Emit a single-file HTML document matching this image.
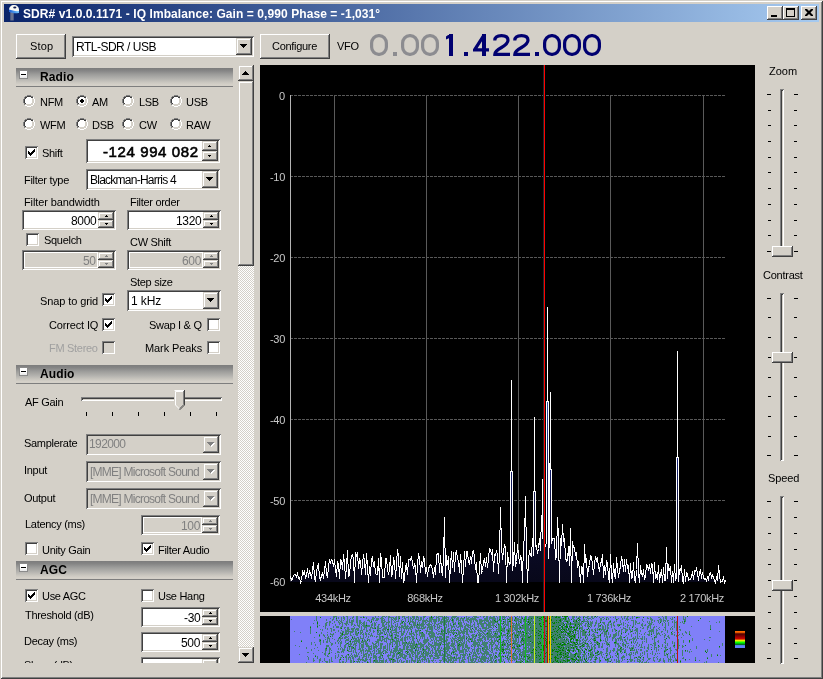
<!DOCTYPE html><html><head><meta charset="utf-8"><style>
html,body{margin:0;padding:0;}
body{width:823px;height:679px;overflow:hidden;position:relative;background:#d4d0c8;font:11px/13px "Liberation Sans",sans-serif;color:#000;}
div,svg{position:absolute;}
.vd{top:28px;font:33px/33px "Liberation Sans";transform-origin:0 0;transform:scaleX(1.12);white-space:nowrap}
.sl{font:11px/13px "Liberation Sans";color:#c8c8c8;white-space:nowrap;letter-spacing:-0.3px;will-change:transform}
.t{white-space:nowrap;letter-spacing:-0.3px;will-change:transform;}
</style></head><body>
<div style="left:0px;top:0px;width:823px;height:679px;box-shadow:inset 1px 1px #d4d0c8,inset -1px -1px #404040,inset 2px 2px #fff,inset -2px -2px #808080;"></div>
<div style="left:4px;top:4px;width:815px;height:18px;background:linear-gradient(to right,#0a246a,#a6caf0);"></div>
<div class="t" style="left:23px;top:7px;font:bold 12px/14px 'Liberation Sans';color:#fff;letter-spacing:0.08px">SDR# v1.0.0.1171 - IQ Imbalance: Gain = 0,990 Phase = -1,031°</div>
<svg style="left:8px;top:4px" width="12" height="18"><defs><linearGradient id="ib" x1="0" x2="1"><stop offset="0" stop-color="#1a5ad0"/><stop offset="1" stop-color="#70c8ff"/></linearGradient></defs><rect x="2.3" y="8.5" width="3.4" height="8" fill="#6a7490"/><path d="M1 6 C1 3 3 1 6 1 C9 1 11 3 11 6 L11 8.5 C8 9.5 4 9 1 7.5z" fill="#f8f8f4"/><path d="M1 5.5 C4 6.5 8 7.5 11 7 L11 8.7 C8 9.8 4 9.3 1 7.8z" fill="url(#ib)"/><ellipse cx="6.8" cy="3.5" rx="1.6" ry="1" fill="#101c50"/></svg>
<div style="left:767px;top:6px;width:16px;height:14px;background:#d4d0c8;box-shadow:inset -1px -1px #404040,inset 1px 1px #fff,inset -2px -2px #808080;"></div>
<div style="left:783px;top:6px;width:16px;height:14px;background:#d4d0c8;box-shadow:inset -1px -1px #404040,inset 1px 1px #fff,inset -2px -2px #808080;"></div>
<div style="left:801px;top:6px;width:16px;height:14px;background:#d4d0c8;box-shadow:inset -1px -1px #404040,inset 1px 1px #fff,inset -2px -2px #808080;"></div>
<div style="left:771px;top:15px;width:6px;height:2px;background:#000"></div>
<div style="left:786px;top:8px;width:9px;height:9px;box-shadow:inset 0 2px #000,inset 1px 0 #000,inset -1px 0 #000,inset 0 -1px #000"></div>
<svg style="left:805px;top:9px" width="8" height="7"><path d="M0 0h2l2 2l2 -2h2v1l-2.5 2.5l2.5 2.5v1h-2l-2 -2l-2 2h-2v-1l2.5 -2.5l-2.5 -2.5z" fill="#000"/></svg>
<div style="left:16px;top:34px;width:50px;height:25px;background:#d4d0c8;box-shadow:inset -1px -1px #404040,inset 1px 1px #fff,inset -2px -2px #808080;"></div>
<div class="t" style="left:30px;top:40px;letter-spacing:0.2px">Stop</div>
<div style="left:72px;top:36px;width:182px;height:21px;background:#fff;box-shadow:inset 1px 1px #808080,inset -1px -1px #fff,inset 2px 2px #404040,inset -2px -2px #d4d0c8;"></div>
<div style="left:236px;top:38px;width:16px;height:17px;background:#d4d0c8;box-shadow:inset -1px -1px #404040,inset 1px 1px #d4d0c8,inset -2px -2px #808080,inset 2px 2px #fff;"></div>
<svg style="left:240px;top:44px" width="7" height="4"><path d="M0 0h7v1h-1v1h-1v1h-1v1h-1v-1h-1v-1h-1v-1h-1z" fill="#000"/></svg>
<div style="left:74px;top:38px;width:162px;height:17px;overflow:hidden"><div class="t" style="left:2px;top:3px;font-size:12px;letter-spacing:-0.6px;letter-spacing:-0.5px">RTL-SDR / USB</div></div>
<div style="left:260px;top:34px;width:70px;height:25px;background:#d4d0c8;box-shadow:inset -1px -1px #404040,inset 1px 1px #fff,inset -2px -2px #808080;"></div>
<div class="t" style="left:272px;top:40px;">Configure</div>
<div class="t" style="left:337px;top:40px;">VFO</div>
<svg style="left:370px;top:34px" width="18" height="22"><rect x="1.6" y="1.6" width="14.8" height="18.8" rx="7" ry="7.5" fill="none" stroke="#8c8c90" stroke-width="3.2"/></svg>
<svg style="left:393px;top:34px" width="4" height="22"><rect x="0" y="18" width="4" height="4" fill="#8c8c90"/></svg>
<svg style="left:401px;top:34px" width="18" height="22"><rect x="1.6" y="1.6" width="14.8" height="18.8" rx="7" ry="7.5" fill="none" stroke="#8c8c90" stroke-width="3.2"/></svg>
<svg style="left:421px;top:34px" width="18" height="22"><rect x="1.6" y="1.6" width="14.8" height="18.8" rx="7" ry="7.5" fill="none" stroke="#8c8c90" stroke-width="3.2"/></svg>
<svg style="left:446px;top:34px" width="8" height="22"><path d="M3 0h4v22h-4z M0 2.5 L3.5 0 L3.5 4 L0 5.5z" fill="#000070"/></svg>
<svg style="left:464px;top:34px" width="4" height="22"><rect x="0" y="18" width="4" height="4" fill="#000070"/></svg>
<svg style="left:473px;top:34px" width="17" height="22"><path d="M11 1.2 L1.6 15.8 H16" fill="none" stroke="#000070" stroke-width="3.2" stroke-linejoin="miter"/><rect x="9" y="0" width="4" height="22" fill="#000070"/></svg>
<svg style="left:493px;top:34px" width="17" height="22"><path d="M1.8 6.5 C1.8 3 4.5 1.6 8.5 1.6 C12.5 1.6 15 3.2 15 6.3 C15 9.5 12.5 11.2 8.5 13.5 C4 16 1.8 18 1.8 20.3 H17" fill="none" stroke="#000070" stroke-width="3.2"/></svg>
<svg style="left:513px;top:34px" width="17" height="22"><path d="M1.8 6.5 C1.8 3 4.5 1.6 8.5 1.6 C12.5 1.6 15 3.2 15 6.3 C15 9.5 12.5 11.2 8.5 13.5 C4 16 1.8 18 1.8 20.3 H17" fill="none" stroke="#000070" stroke-width="3.2"/></svg>
<svg style="left:535px;top:34px" width="4" height="22"><rect x="0" y="18" width="4" height="4" fill="#000070"/></svg>
<svg style="left:543px;top:34px" width="18" height="22"><rect x="1.6" y="1.6" width="14.8" height="18.8" rx="7" ry="7.5" fill="none" stroke="#000070" stroke-width="3.2"/></svg>
<svg style="left:563px;top:34px" width="18" height="22"><rect x="1.6" y="1.6" width="14.8" height="18.8" rx="7" ry="7.5" fill="none" stroke="#000070" stroke-width="3.2"/></svg>
<svg style="left:583px;top:34px" width="18" height="22"><rect x="1.6" y="1.6" width="14.8" height="18.8" rx="7" ry="7.5" fill="none" stroke="#000070" stroke-width="3.2"/></svg>
<div style="left:16px;top:68px;width:217px;height:18px;background:linear-gradient(#7c7c7c 0%,#858585 15%,#9c9c9a 35%,#b4b3af 60%,#cac7c0 80%,#d4d0c8 92%);"></div>
<div style="left:16px;top:86px;width:217px;height:1px;background:#7e7e7e;"></div>
<div style="left:19px;top:70px;width:9px;height:9px;background:linear-gradient(#fff 50%,#e0e0e0);box-shadow:inset 0 0 0 1px #8a8a8a;"></div>
<div style="left:21px;top:74px;width:5px;height:1px;background:#000;"></div>
<div class="t" style="left:40px;top:70px;font:bold 12px/14px 'Liberation Sans';letter-spacing:0.1px">Radio</div>
<svg style="left:23px;top:95px" width="12" height="12"><path d="M4 0h4v1h2v1h-2v-1h-4v1h-2v2h-1v4h1v2h-1v-2h-1v-4h1v-2h1v-1h2z" fill="#808080"/><path d="M4 1h4v1h2v1h-2v-1h-4v1h-1v1h-1v4h1v1h-1v-1h-1v-4h1v-2h2z" fill="#404040"/><path d="M4 2h4v1h1v1h1v4h-1v1h-1v1h-4v-1h-1v-1h-1v-4h1v-1h1z" fill="#fff"/><path d="M10 2h1v2h1v4h-1v2h-1v1h-2v1h-4v-1h-2v-1h2v1h4v-1h2v-2h1v-4h-1z" fill="#fff"/><path d="M9 3h1v1h0v4h-1v1h-1v1h-4v-1h4v-1h1v-1h0v-3z" fill="#d4d0c8"/></svg>
<div class="t" style="left:40px;top:96px;">NFM</div>
<svg style="left:76px;top:95px" width="12" height="12"><path d="M4 0h4v1h2v1h-2v-1h-4v1h-2v2h-1v4h1v2h-1v-2h-1v-4h1v-2h1v-1h2z" fill="#808080"/><path d="M4 1h4v1h2v1h-2v-1h-4v1h-1v1h-1v4h1v1h-1v-1h-1v-4h1v-2h2z" fill="#404040"/><path d="M4 2h4v1h1v1h1v4h-1v1h-1v1h-4v-1h-1v-1h-1v-4h1v-1h1z" fill="#fff"/><path d="M10 2h1v2h1v4h-1v2h-1v1h-2v1h-4v-1h-2v-1h2v1h4v-1h2v-2h1v-4h-1z" fill="#fff"/><path d="M9 3h1v1h0v4h-1v1h-1v1h-4v-1h4v-1h1v-1h0v-3z" fill="#d4d0c8"/><path d="M5 4h2v1h1v2h-1v1h-2v-1h-1v-2h1z" fill="#000"/></svg>
<div class="t" style="left:92px;top:96px;">AM</div>
<svg style="left:122px;top:95px" width="12" height="12"><path d="M4 0h4v1h2v1h-2v-1h-4v1h-2v2h-1v4h1v2h-1v-2h-1v-4h1v-2h1v-1h2z" fill="#808080"/><path d="M4 1h4v1h2v1h-2v-1h-4v1h-1v1h-1v4h1v1h-1v-1h-1v-4h1v-2h2z" fill="#404040"/><path d="M4 2h4v1h1v1h1v4h-1v1h-1v1h-4v-1h-1v-1h-1v-4h1v-1h1z" fill="#fff"/><path d="M10 2h1v2h1v4h-1v2h-1v1h-2v1h-4v-1h-2v-1h2v1h4v-1h2v-2h1v-4h-1z" fill="#fff"/><path d="M9 3h1v1h0v4h-1v1h-1v1h-4v-1h4v-1h1v-1h0v-3z" fill="#d4d0c8"/></svg>
<div class="t" style="left:139px;top:96px;">LSB</div>
<svg style="left:170px;top:95px" width="12" height="12"><path d="M4 0h4v1h2v1h-2v-1h-4v1h-2v2h-1v4h1v2h-1v-2h-1v-4h1v-2h1v-1h2z" fill="#808080"/><path d="M4 1h4v1h2v1h-2v-1h-4v1h-1v1h-1v4h1v1h-1v-1h-1v-4h1v-2h2z" fill="#404040"/><path d="M4 2h4v1h1v1h1v4h-1v1h-1v1h-4v-1h-1v-1h-1v-4h1v-1h1z" fill="#fff"/><path d="M10 2h1v2h1v4h-1v2h-1v1h-2v1h-4v-1h-2v-1h2v1h4v-1h2v-2h1v-4h-1z" fill="#fff"/><path d="M9 3h1v1h0v4h-1v1h-1v1h-4v-1h4v-1h1v-1h0v-3z" fill="#d4d0c8"/></svg>
<div class="t" style="left:186px;top:96px;">USB</div>
<svg style="left:23px;top:118px" width="12" height="12"><path d="M4 0h4v1h2v1h-2v-1h-4v1h-2v2h-1v4h1v2h-1v-2h-1v-4h1v-2h1v-1h2z" fill="#808080"/><path d="M4 1h4v1h2v1h-2v-1h-4v1h-1v1h-1v4h1v1h-1v-1h-1v-4h1v-2h2z" fill="#404040"/><path d="M4 2h4v1h1v1h1v4h-1v1h-1v1h-4v-1h-1v-1h-1v-4h1v-1h1z" fill="#fff"/><path d="M10 2h1v2h1v4h-1v2h-1v1h-2v1h-4v-1h-2v-1h2v1h4v-1h2v-2h1v-4h-1z" fill="#fff"/><path d="M9 3h1v1h0v4h-1v1h-1v1h-4v-1h4v-1h1v-1h0v-3z" fill="#d4d0c8"/></svg>
<div class="t" style="left:40px;top:119px;">WFM</div>
<svg style="left:76px;top:118px" width="12" height="12"><path d="M4 0h4v1h2v1h-2v-1h-4v1h-2v2h-1v4h1v2h-1v-2h-1v-4h1v-2h1v-1h2z" fill="#808080"/><path d="M4 1h4v1h2v1h-2v-1h-4v1h-1v1h-1v4h1v1h-1v-1h-1v-4h1v-2h2z" fill="#404040"/><path d="M4 2h4v1h1v1h1v4h-1v1h-1v1h-4v-1h-1v-1h-1v-4h1v-1h1z" fill="#fff"/><path d="M10 2h1v2h1v4h-1v2h-1v1h-2v1h-4v-1h-2v-1h2v1h4v-1h2v-2h1v-4h-1z" fill="#fff"/><path d="M9 3h1v1h0v4h-1v1h-1v1h-4v-1h4v-1h1v-1h0v-3z" fill="#d4d0c8"/></svg>
<div class="t" style="left:92px;top:119px;">DSB</div>
<svg style="left:122px;top:118px" width="12" height="12"><path d="M4 0h4v1h2v1h-2v-1h-4v1h-2v2h-1v4h1v2h-1v-2h-1v-4h1v-2h1v-1h2z" fill="#808080"/><path d="M4 1h4v1h2v1h-2v-1h-4v1h-1v1h-1v4h1v1h-1v-1h-1v-4h1v-2h2z" fill="#404040"/><path d="M4 2h4v1h1v1h1v4h-1v1h-1v1h-4v-1h-1v-1h-1v-4h1v-1h1z" fill="#fff"/><path d="M10 2h1v2h1v4h-1v2h-1v1h-2v1h-4v-1h-2v-1h2v1h4v-1h2v-2h1v-4h-1z" fill="#fff"/><path d="M9 3h1v1h0v4h-1v1h-1v1h-4v-1h4v-1h1v-1h0v-3z" fill="#d4d0c8"/></svg>
<div class="t" style="left:139px;top:119px;">CW</div>
<svg style="left:170px;top:118px" width="12" height="12"><path d="M4 0h4v1h2v1h-2v-1h-4v1h-2v2h-1v4h1v2h-1v-2h-1v-4h1v-2h1v-1h2z" fill="#808080"/><path d="M4 1h4v1h2v1h-2v-1h-4v1h-1v1h-1v4h1v1h-1v-1h-1v-4h1v-2h2z" fill="#404040"/><path d="M4 2h4v1h1v1h1v4h-1v1h-1v1h-4v-1h-1v-1h-1v-4h1v-1h1z" fill="#fff"/><path d="M10 2h1v2h1v4h-1v2h-1v1h-2v1h-4v-1h-2v-1h2v1h4v-1h2v-2h1v-4h-1z" fill="#fff"/><path d="M9 3h1v1h0v4h-1v1h-1v1h-4v-1h4v-1h1v-1h0v-3z" fill="#d4d0c8"/></svg>
<div class="t" style="left:186px;top:119px;">RAW</div>
<div style="left:25px;top:146px;width:13px;height:13px;background:#fff;box-shadow:inset 1px 1px #808080,inset -1px -1px #fff,inset 2px 2px #404040,inset -2px -2px #d4d0c8;"></div>
<svg style="left:28px;top:149px" width="7" height="7"><path d="M6 0h1v3h-1v1h-1v1h-1v1h-1v1h-1v-1h-1v-1h-1v-3h1v1h1v1h1v-1h1v-1h1v-1h1z" fill="#000"/></svg>
<div class="t" style="left:42px;top:147px;">Shift</div>
<div style="left:86px;top:139px;width:134px;height:24px;background:#fff;box-shadow:inset 1px 1px #808080,inset -1px -1px #fff,inset 2px 2px #404040,inset -2px -2px #d4d0c8;"></div>
<div style="left:202px;top:141px;width:16px;height:10px;background:#d4d0c8;box-shadow:inset -1px -1px #404040,inset 1px 1px #d4d0c8,inset -2px -2px #808080,inset 2px 2px #fff;"></div>
<div style="left:202px;top:151px;width:16px;height:10px;background:#d4d0c8;box-shadow:inset -1px -1px #404040,inset 1px 1px #d4d0c8,inset -2px -2px #808080,inset 2px 2px #fff;"></div>
<svg style="left:208px;top:145px" width="3" height="2"><path d="M1 0h1v1h1v1h-3v-1h1z" fill="#000"/></svg>
<svg style="left:208px;top:155px" width="3" height="2"><path d="M0 0h3v1h-1v1h-1v-1h-1z" fill="#000"/></svg>
<div class="t" style="right:624px;top:143px;font:15px/17px 'Liberation Sans';-webkit-text-stroke:0.6px #000;letter-spacing:0.6px;text-align:right">-124 994 082</div>
<div class="t" style="left:24px;top:174px;">Filter type</div>
<div style="left:86px;top:169px;width:134px;height:21px;background:#fff;box-shadow:inset 1px 1px #808080,inset -1px -1px #fff,inset 2px 2px #404040,inset -2px -2px #d4d0c8;"></div>
<div style="left:202px;top:171px;width:16px;height:17px;background:#d4d0c8;box-shadow:inset -1px -1px #404040,inset 1px 1px #d4d0c8,inset -2px -2px #808080,inset 2px 2px #fff;"></div>
<svg style="left:206px;top:177px" width="7" height="4"><path d="M0 0h7v1h-1v1h-1v1h-1v1h-1v-1h-1v-1h-1v-1h-1z" fill="#000"/></svg>
<div style="left:88px;top:171px;width:114px;height:17px;overflow:hidden"><div class="t" style="left:2px;top:3px;font-size:12px;letter-spacing:-0.6px;letter-spacing:-0.75px">Blackman-Harris 4</div></div>
<div class="t" style="left:24px;top:196px;letter-spacing:-0.12px">Filter bandwidth</div>
<div class="t" style="left:130px;top:196px;">Filter order</div>
<div style="left:22px;top:210px;width:94px;height:20px;background:#fff;box-shadow:inset 1px 1px #808080,inset -1px -1px #fff,inset 2px 2px #404040,inset -2px -2px #d4d0c8;"></div>
<div style="left:98px;top:212px;width:16px;height:8px;background:#d4d0c8;box-shadow:inset -1px -1px #404040,inset 1px 1px #d4d0c8,inset -2px -2px #808080,inset 2px 2px #fff;"></div>
<div style="left:98px;top:220px;width:16px;height:8px;background:#d4d0c8;box-shadow:inset -1px -1px #404040,inset 1px 1px #d4d0c8,inset -2px -2px #808080,inset 2px 2px #fff;"></div>
<svg style="left:105px;top:215px" width="3" height="2"><path d="M1 0h1v1h1v1h-3v-1h1z" fill="#000"/></svg>
<svg style="left:105px;top:223px" width="3" height="2"><path d="M0 0h3v1h-1v1h-1v-1h-1z" fill="#000"/></svg>
<div class="t" style="right:727px;top:215px;text-align:right;font-size:12px;letter-spacing:-0.3px;">8000</div>
<div style="left:127px;top:210px;width:94px;height:20px;background:#fff;box-shadow:inset 1px 1px #808080,inset -1px -1px #fff,inset 2px 2px #404040,inset -2px -2px #d4d0c8;"></div>
<div style="left:203px;top:212px;width:16px;height:8px;background:#d4d0c8;box-shadow:inset -1px -1px #404040,inset 1px 1px #d4d0c8,inset -2px -2px #808080,inset 2px 2px #fff;"></div>
<div style="left:203px;top:220px;width:16px;height:8px;background:#d4d0c8;box-shadow:inset -1px -1px #404040,inset 1px 1px #d4d0c8,inset -2px -2px #808080,inset 2px 2px #fff;"></div>
<svg style="left:210px;top:215px" width="3" height="2"><path d="M1 0h1v1h1v1h-3v-1h1z" fill="#000"/></svg>
<svg style="left:210px;top:223px" width="3" height="2"><path d="M0 0h3v1h-1v1h-1v-1h-1z" fill="#000"/></svg>
<div class="t" style="right:622px;top:215px;text-align:right;font-size:12px;letter-spacing:-0.3px;">1320</div>
<div style="left:26px;top:233px;width:13px;height:13px;background:#fff;box-shadow:inset 1px 1px #808080,inset -1px -1px #fff,inset 2px 2px #404040,inset -2px -2px #d4d0c8;"></div>
<div class="t" style="left:44px;top:234px;">Squelch</div>
<div class="t" style="left:130px;top:236px;">CW Shift</div>
<div style="left:22px;top:250px;width:94px;height:20px;background:#fff;box-shadow:inset 1px 1px #808080,inset -1px -1px #fff,inset 2px 2px #404040,inset -2px -2px #d4d0c8;"></div>
<div style="left:25px;top:253px;width:72px;height:14px;background:#d4d0c8;"></div>
<div style="left:98px;top:252px;width:16px;height:8px;background:#d4d0c8;box-shadow:inset -1px -1px #404040,inset 1px 1px #d4d0c8,inset -2px -2px #808080,inset 2px 2px #fff;"></div>
<div style="left:98px;top:260px;width:16px;height:8px;background:#d4d0c8;box-shadow:inset -1px -1px #404040,inset 1px 1px #d4d0c8,inset -2px -2px #808080,inset 2px 2px #fff;"></div>
<svg style="left:105px;top:255px" width="3" height="2"><path d="M1 0h1v1h1v1h-3v-1h1z" fill="#808080"/></svg>
<svg style="left:105px;top:263px" width="3" height="2"><path d="M0 0h3v1h-1v1h-1v-1h-1z" fill="#808080"/></svg>
<div class="t" style="right:727px;top:255px;text-align:right;font-size:12px;letter-spacing:-0.3px;color:#808080;">50</div>
<div style="left:127px;top:250px;width:94px;height:20px;background:#fff;box-shadow:inset 1px 1px #808080,inset -1px -1px #fff,inset 2px 2px #404040,inset -2px -2px #d4d0c8;"></div>
<div style="left:130px;top:253px;width:72px;height:14px;background:#d4d0c8;"></div>
<div style="left:203px;top:252px;width:16px;height:8px;background:#d4d0c8;box-shadow:inset -1px -1px #404040,inset 1px 1px #d4d0c8,inset -2px -2px #808080,inset 2px 2px #fff;"></div>
<div style="left:203px;top:260px;width:16px;height:8px;background:#d4d0c8;box-shadow:inset -1px -1px #404040,inset 1px 1px #d4d0c8,inset -2px -2px #808080,inset 2px 2px #fff;"></div>
<svg style="left:210px;top:255px" width="3" height="2"><path d="M1 0h1v1h1v1h-3v-1h1z" fill="#808080"/></svg>
<svg style="left:210px;top:263px" width="3" height="2"><path d="M0 0h3v1h-1v1h-1v-1h-1z" fill="#808080"/></svg>
<div class="t" style="right:622px;top:255px;text-align:right;font-size:12px;letter-spacing:-0.3px;color:#808080;">600</div>
<div class="t" style="left:130px;top:276px;">Step size</div>
<div style="left:127px;top:290px;width:94px;height:21px;background:#fff;box-shadow:inset 1px 1px #808080,inset -1px -1px #fff,inset 2px 2px #404040,inset -2px -2px #d4d0c8;"></div>
<div style="left:203px;top:292px;width:16px;height:17px;background:#d4d0c8;box-shadow:inset -1px -1px #404040,inset 1px 1px #d4d0c8,inset -2px -2px #808080,inset 2px 2px #fff;"></div>
<svg style="left:207px;top:298px" width="7" height="4"><path d="M0 0h7v1h-1v1h-1v1h-1v1h-1v-1h-1v-1h-1v-1h-1z" fill="#000"/></svg>
<div style="left:129px;top:292px;width:74px;height:17px;overflow:hidden"><div class="t" style="left:2px;top:3px;font-size:12px;letter-spacing:-0.6px;letter-spacing:-0.1px">1 kHz</div></div>
<div class="t" style="right:725px;top:295px;text-align:right;letter-spacing:-0.1px">Snap to grid</div>
<div style="left:102px;top:293px;width:13px;height:13px;background:#fff;box-shadow:inset 1px 1px #808080,inset -1px -1px #fff,inset 2px 2px #404040,inset -2px -2px #d4d0c8;"></div>
<svg style="left:105px;top:296px" width="7" height="7"><path d="M6 0h1v3h-1v1h-1v1h-1v1h-1v1h-1v-1h-1v-1h-1v-3h1v1h1v1h1v-1h1v-1h1v-1h1z" fill="#000"/></svg>
<div class="t" style="right:725px;top:319px;text-align:right;letter-spacing:-0.15px">Correct IQ</div>
<div style="left:102px;top:318px;width:13px;height:13px;background:#fff;box-shadow:inset 1px 1px #808080,inset -1px -1px #fff,inset 2px 2px #404040,inset -2px -2px #d4d0c8;"></div>
<svg style="left:105px;top:321px" width="7" height="7"><path d="M6 0h1v3h-1v1h-1v1h-1v1h-1v1h-1v-1h-1v-1h-1v-3h1v1h1v1h1v-1h1v-1h1v-1h1z" fill="#000"/></svg>
<div class="t" style="right:725px;top:342px;text-align:right;color:#a0a0a0">FM Stereo</div>
<div style="left:102px;top:341px;width:13px;height:13px;background:#d4d0c8;box-shadow:inset 1px 1px #808080,inset -1px -1px #fff,inset 2px 2px #404040,inset -2px -2px #d4d0c8;"></div>
<div class="t" style="right:621px;top:319px;text-align:right;">Swap I &amp; Q</div>
<div style="left:207px;top:318px;width:13px;height:13px;background:#fff;box-shadow:inset 1px 1px #808080,inset -1px -1px #fff,inset 2px 2px #404040,inset -2px -2px #d4d0c8;"></div>
<div class="t" style="right:621px;top:342px;text-align:right;letter-spacing:-0.1px">Mark Peaks</div>
<div style="left:207px;top:341px;width:13px;height:13px;background:#fff;box-shadow:inset 1px 1px #808080,inset -1px -1px #fff,inset 2px 2px #404040,inset -2px -2px #d4d0c8;"></div>
<div style="left:16px;top:365px;width:217px;height:18px;background:linear-gradient(#7c7c7c 0%,#858585 15%,#9c9c9a 35%,#b4b3af 60%,#cac7c0 80%,#d4d0c8 92%);"></div>
<div style="left:16px;top:383px;width:217px;height:1px;background:#7e7e7e;"></div>
<div style="left:19px;top:367px;width:9px;height:9px;background:linear-gradient(#fff 50%,#e0e0e0);box-shadow:inset 0 0 0 1px #8a8a8a;"></div>
<div style="left:21px;top:371px;width:5px;height:1px;background:#000;"></div>
<div class="t" style="left:40px;top:367px;font:bold 12px/14px 'Liberation Sans';letter-spacing:0.1px">Audio</div>
<div class="t" style="left:25px;top:396px;">AF Gain</div>
<div style="left:81px;top:397px;width:141px;height:4px;box-shadow:inset 1px 1px #808080,inset -1px -1px #fff,inset 2px 2px #404040,inset -2px -2px #d4d0c8;"></div>
<div style="left:86px;top:412px;width:1px;height:4px;background:#000;"></div>
<div style="left:112px;top:412px;width:1px;height:4px;background:#000;"></div>
<div style="left:138px;top:412px;width:1px;height:4px;background:#000;"></div>
<div style="left:164px;top:412px;width:1px;height:4px;background:#000;"></div>
<div style="left:190px;top:412px;width:1px;height:4px;background:#000;"></div>
<div style="left:216px;top:412px;width:1px;height:4px;background:#000;"></div>
<svg style="left:174px;top:390px" width="11" height="21"><path d="M0 0h11v15l-5 5l-6 -6z" fill="#d4d0c8"/><path d="M0 0h10v1h-9v13.5l5 5" fill="none" stroke="#fff" stroke-width="1" transform="translate(0.5,0.5)"/><path d="M10.5 0v15l-5 5" fill="none" stroke="#404040"/><path d="M9.5 1v13.6l-4 4" fill="none" stroke="#808080"/></svg>
<div class="t" style="left:24px;top:437px;">Samplerate</div>
<div style="left:86px;top:434px;width:135px;height:21px;background:#d4d0c8;box-shadow:inset 1px 1px #808080,inset -1px -1px #fff,inset 2px 2px #404040,inset -2px -2px #d4d0c8;"></div>
<div style="left:203px;top:436px;width:16px;height:17px;background:#d4d0c8;box-shadow:inset -1px -1px #404040,inset 1px 1px #d4d0c8,inset -2px -2px #808080,inset 2px 2px #fff;"></div>
<svg style="left:208px;top:443px" width="7" height="4"><path d="M0 0h7v1h-1v1h-1v1h-1v1h-1v-1h-1v-1h-1v-1h-1z" fill="#fff"/></svg>
<svg style="left:207px;top:442px" width="7" height="4"><path d="M0 0h7v1h-1v1h-1v1h-1v1h-1v-1h-1v-1h-1v-1h-1z" fill="#808080"/></svg>
<div style="left:88px;top:436px;width:115px;height:17px;overflow:hidden"><div class="t" style="left:1px;top:2px;font-size:12px;letter-spacing:-0.6px;color:#808080;">192000</div></div>
<div class="t" style="left:24px;top:464px;">Input</div>
<div style="left:86px;top:461px;width:135px;height:21px;background:#d4d0c8;box-shadow:inset 1px 1px #808080,inset -1px -1px #fff,inset 2px 2px #404040,inset -2px -2px #d4d0c8;"></div>
<div style="left:203px;top:463px;width:16px;height:17px;background:#d4d0c8;box-shadow:inset -1px -1px #404040,inset 1px 1px #d4d0c8,inset -2px -2px #808080,inset 2px 2px #fff;"></div>
<svg style="left:208px;top:470px" width="7" height="4"><path d="M0 0h7v1h-1v1h-1v1h-1v1h-1v-1h-1v-1h-1v-1h-1z" fill="#fff"/></svg>
<svg style="left:207px;top:469px" width="7" height="4"><path d="M0 0h7v1h-1v1h-1v1h-1v1h-1v-1h-1v-1h-1v-1h-1z" fill="#808080"/></svg>
<div style="left:88px;top:463px;width:115px;height:17px;overflow:hidden"><div class="t" style="left:2px;top:3px;font-size:12px;letter-spacing:-0.6px;color:#808080;letter-spacing:-0.75px">[MME] Microsoft Sound</div></div>
<div class="t" style="left:24px;top:492px;">Output</div>
<div style="left:86px;top:488px;width:135px;height:21px;background:#d4d0c8;box-shadow:inset 1px 1px #808080,inset -1px -1px #fff,inset 2px 2px #404040,inset -2px -2px #d4d0c8;"></div>
<div style="left:203px;top:490px;width:16px;height:17px;background:#d4d0c8;box-shadow:inset -1px -1px #404040,inset 1px 1px #d4d0c8,inset -2px -2px #808080,inset 2px 2px #fff;"></div>
<svg style="left:208px;top:497px" width="7" height="4"><path d="M0 0h7v1h-1v1h-1v1h-1v1h-1v-1h-1v-1h-1v-1h-1z" fill="#fff"/></svg>
<svg style="left:207px;top:496px" width="7" height="4"><path d="M0 0h7v1h-1v1h-1v1h-1v1h-1v-1h-1v-1h-1v-1h-1z" fill="#808080"/></svg>
<div style="left:88px;top:490px;width:115px;height:17px;overflow:hidden"><div class="t" style="left:2px;top:3px;font-size:12px;letter-spacing:-0.6px;color:#808080;letter-spacing:-0.75px">[MME] Microsoft Sound</div></div>
<div class="t" style="left:25px;top:518px;">Latency (ms)</div>
<div style="left:141px;top:515px;width:79px;height:20px;background:#fff;box-shadow:inset 1px 1px #808080,inset -1px -1px #fff,inset 2px 2px #404040,inset -2px -2px #d4d0c8;"></div>
<div style="left:144px;top:518px;width:57px;height:14px;background:#d4d0c8;"></div>
<div style="left:202px;top:517px;width:16px;height:8px;background:#d4d0c8;box-shadow:inset -1px -1px #404040,inset 1px 1px #d4d0c8,inset -2px -2px #808080,inset 2px 2px #fff;"></div>
<div style="left:202px;top:525px;width:16px;height:8px;background:#d4d0c8;box-shadow:inset -1px -1px #404040,inset 1px 1px #d4d0c8,inset -2px -2px #808080,inset 2px 2px #fff;"></div>
<svg style="left:209px;top:520px" width="3" height="2"><path d="M1 0h1v1h1v1h-3v-1h1z" fill="#808080"/></svg>
<svg style="left:209px;top:528px" width="3" height="2"><path d="M0 0h3v1h-1v1h-1v-1h-1z" fill="#808080"/></svg>
<div class="t" style="right:623px;top:520px;text-align:right;font-size:12px;letter-spacing:-0.3px;color:#808080;">100</div>
<div style="left:25px;top:542px;width:13px;height:13px;background:#fff;box-shadow:inset 1px 1px #808080,inset -1px -1px #fff,inset 2px 2px #404040,inset -2px -2px #d4d0c8;"></div>
<div class="t" style="left:42px;top:544px;">Unity Gain</div>
<div style="left:141px;top:542px;width:13px;height:13px;background:#fff;box-shadow:inset 1px 1px #808080,inset -1px -1px #fff,inset 2px 2px #404040,inset -2px -2px #d4d0c8;"></div>
<svg style="left:144px;top:545px" width="7" height="7"><path d="M6 0h1v3h-1v1h-1v1h-1v1h-1v1h-1v-1h-1v-1h-1v-3h1v1h1v1h1v-1h1v-1h1v-1h1z" fill="#000"/></svg>
<div class="t" style="left:158px;top:544px;">Filter Audio</div>
<div style="left:16px;top:561px;width:217px;height:18px;background:linear-gradient(#7c7c7c 0%,#858585 15%,#9c9c9a 35%,#b4b3af 60%,#cac7c0 80%,#d4d0c8 92%);"></div>
<div style="left:16px;top:579px;width:217px;height:1px;background:#7e7e7e;"></div>
<div style="left:19px;top:563px;width:9px;height:9px;background:linear-gradient(#fff 50%,#e0e0e0);box-shadow:inset 0 0 0 1px #8a8a8a;"></div>
<div style="left:21px;top:567px;width:5px;height:1px;background:#000;"></div>
<div class="t" style="left:40px;top:563px;font:bold 12px/14px 'Liberation Sans';letter-spacing:0.1px">AGC</div>
<div style="left:25px;top:589px;width:13px;height:13px;background:#fff;box-shadow:inset 1px 1px #808080,inset -1px -1px #fff,inset 2px 2px #404040,inset -2px -2px #d4d0c8;"></div>
<svg style="left:28px;top:592px" width="7" height="7"><path d="M6 0h1v3h-1v1h-1v1h-1v1h-1v1h-1v-1h-1v-1h-1v-3h1v1h1v1h1v-1h1v-1h1v-1h1z" fill="#000"/></svg>
<div class="t" style="left:42px;top:590px;">Use AGC</div>
<div style="left:141px;top:589px;width:13px;height:13px;background:#fff;box-shadow:inset 1px 1px #808080,inset -1px -1px #fff,inset 2px 2px #404040,inset -2px -2px #d4d0c8;"></div>
<div class="t" style="left:158px;top:590px;">Use Hang</div>
<div class="t" style="left:25px;top:609px;">Threshold (dB)</div>
<div style="left:141px;top:607px;width:79px;height:20px;background:#fff;box-shadow:inset 1px 1px #808080,inset -1px -1px #fff,inset 2px 2px #404040,inset -2px -2px #d4d0c8;"></div>
<div style="left:202px;top:609px;width:16px;height:8px;background:#d4d0c8;box-shadow:inset -1px -1px #404040,inset 1px 1px #d4d0c8,inset -2px -2px #808080,inset 2px 2px #fff;"></div>
<div style="left:202px;top:617px;width:16px;height:8px;background:#d4d0c8;box-shadow:inset -1px -1px #404040,inset 1px 1px #d4d0c8,inset -2px -2px #808080,inset 2px 2px #fff;"></div>
<svg style="left:209px;top:612px" width="3" height="2"><path d="M1 0h1v1h1v1h-3v-1h1z" fill="#000"/></svg>
<svg style="left:209px;top:620px" width="3" height="2"><path d="M0 0h3v1h-1v1h-1v-1h-1z" fill="#000"/></svg>
<div class="t" style="right:623px;top:612px;text-align:right;font-size:12px;letter-spacing:-0.3px;">-30</div>
<div class="t" style="left:24px;top:635px;">Decay (ms)</div>
<div style="left:141px;top:632px;width:79px;height:20px;background:#fff;box-shadow:inset 1px 1px #808080,inset -1px -1px #fff,inset 2px 2px #404040,inset -2px -2px #d4d0c8;"></div>
<div style="left:202px;top:634px;width:16px;height:8px;background:#d4d0c8;box-shadow:inset -1px -1px #404040,inset 1px 1px #d4d0c8,inset -2px -2px #808080,inset 2px 2px #fff;"></div>
<div style="left:202px;top:642px;width:16px;height:8px;background:#d4d0c8;box-shadow:inset -1px -1px #404040,inset 1px 1px #d4d0c8,inset -2px -2px #808080,inset 2px 2px #fff;"></div>
<svg style="left:209px;top:637px" width="3" height="2"><path d="M1 0h1v1h1v1h-3v-1h1z" fill="#000"/></svg>
<svg style="left:209px;top:645px" width="3" height="2"><path d="M0 0h3v1h-1v1h-1v-1h-1z" fill="#000"/></svg>
<div class="t" style="right:623px;top:637px;text-align:right;font-size:12px;letter-spacing:-0.3px;">500</div>
<div style="left:16px;top:655px;width:222px;height:8px;overflow:hidden">
<div class="t" style="left:8px;top:4px">Slope (dB)</div>
<div style="left:125px;top:2px;width:79px;height:20px;background:#fff;box-shadow:inset 1px 1px #808080,inset -1px -1px #fff,inset 2px 2px #404040,inset -2px -2px #d4d0c8;"></div>
<div style="left:186px;top:4px;width:16px;height:8px;background:#d4d0c8;box-shadow:inset -1px -1px #404040,inset 1px 1px #d4d0c8,inset -2px -2px #808080,inset 2px 2px #fff;"></div>
</div>
<div style="left:238px;top:65px;width:16px;height:598px;background-color:#fff;background-image:repeating-conic-gradient(#d4d0c8 0 25%,#fff 0 50%);background-size:2px 2px;"></div>
<div style="left:238px;top:65px;width:16px;height:16px;background:#d4d0c8;box-shadow:inset -1px -1px #404040,inset 1px 1px #d4d0c8,inset -2px -2px #808080,inset 2px 2px #fff;"></div>
<svg style="left:242px;top:71px" width="7" height="4"><path d="M3 0h1v1h1v1h1v1h1v1h-7v-1h1v-1h1v-1h1z" fill="#000"/></svg>
<div style="left:238px;top:81px;width:16px;height:185px;background:#d4d0c8;box-shadow:inset -1px -1px #404040,inset 1px 1px #d4d0c8,inset -2px -2px #808080,inset 2px 2px #fff;"></div>
<div style="left:238px;top:647px;width:16px;height:16px;background:#d4d0c8;box-shadow:inset -1px -1px #404040,inset 1px 1px #d4d0c8,inset -2px -2px #808080,inset 2px 2px #fff;"></div>
<svg style="left:242px;top:653px" width="7" height="4"><path d="M0 0h7v1h-1v1h-1v1h-1v1h-1v-1h-1v-1h-1v-1h-1z" fill="#000"/></svg>
<div style="left:260px;top:65px;width:495px;height:547px;background:#000;"></div>
<svg style="left:0;top:0" width="823" height="679"><path d="M290 95.5H726" stroke="#585858" stroke-width="1" stroke-dasharray="3 1"/><path d="M290 176.5H726" stroke="#585858" stroke-width="1" stroke-dasharray="3 1"/><path d="M290 257.5H726" stroke="#585858" stroke-width="1" stroke-dasharray="3 1"/><path d="M290 338.5H726" stroke="#585858" stroke-width="1" stroke-dasharray="3 1"/><path d="M290 419.5H726" stroke="#585858" stroke-width="1" stroke-dasharray="3 1"/><path d="M290 500.5H726" stroke="#585858" stroke-width="1" stroke-dasharray="3 1"/><path d="M334.5 95V582" stroke="#5a5a5a" stroke-width="1"/><path d="M426.5 95V582" stroke="#5a5a5a" stroke-width="1"/><path d="M518.5 95V582" stroke="#5a5a5a" stroke-width="1"/><path d="M610.5 95V582" stroke="#5a5a5a" stroke-width="1"/><path d="M703.5 95V582" stroke="#5a5a5a" stroke-width="1"/><path d="M290.5 95V582" stroke="#b4b4b4" stroke-width="1"/><path d="M290 581.5H726" stroke="#3a3a48" stroke-width="1"/><defs><linearGradient id="sf" gradientUnits="userSpaceOnUse" x1="0" y1="300" x2="0" y2="582"><stop offset="0" stop-color="#4070d0"/><stop offset="0.35" stop-color="#2a50a8"/><stop offset="0.56" stop-color="#16247a"/><stop offset="0.8" stop-color="#0c0c2c"/><stop offset="1" stop-color="#08081a"/></linearGradient></defs><polygon points="290.5,582 290.5,576.5 291.5,580.5 292.5,579.5 293.5,575.5 294.5,574.5 295.5,574.5 296.5,576.5 297.5,573.5 298.5,578.5 299.5,577.5 300.5,582.5 301.5,580.5 302.5,571.5 303.5,573.5 304.5,571.5 305.5,577.5 306.5,575.5 307.5,568.5 308.5,577.5 309.5,571.5 310.5,573.5 311.5,578.5 312.5,569.5 313.5,562.5 314.5,577.5 315.5,581.5 316.5,571.5 317.5,566.5 318.5,563.5 319.5,577.5 320.5,579.5 321.5,575.5 322.5,573.5 323.5,578.5 324.5,570.5 325.5,561.5 326.5,573.5 327.5,577.5 328.5,567.5 329.5,559.5 330.5,562.5 331.5,559.5 332.5,560.5 333.5,566.5 334.5,559.5 335.5,569.5 336.5,576.5 337.5,562.5 338.5,564.5 339.5,578.5 340.5,559.5 341.5,560.5 342.5,569.5 343.5,554.5 344.5,563.5 345.5,578.5 346.5,566.5 347.5,550.5 348.5,576.5 349.5,575.5 350.5,563.5 351.5,555.5 352.5,554.5 353.5,558.5 354.5,582.5 355.5,552.5 356.5,555.5 357.5,553.5 358.5,568.5 359.5,559.5 360.5,561.5 361.5,574.5 362.5,564.5 363.5,554.5 364.5,561.5 365.5,574.5 366.5,553.5 367.5,566.5 368.5,582.5 369.5,566.5 370.5,575.5 371.5,559.5 372.5,557.5 373.5,566.5 374.5,561.5 375.5,573.5 376.5,574.5 377.5,574.5 378.5,558.5 379.5,582.5 380.5,553.5 381.5,559.5 382.5,577.5 383.5,577.5 384.5,577.5 385.5,558.5 386.5,558.5 387.5,569.5 388.5,574.5 389.5,569.5 390.5,555.5 391.5,576.5 392.5,572.5 393.5,557.5 394.5,561.5 395.5,578.5 396.5,563.5 397.5,549.5 398.5,556.5 399.5,576.5 400.5,556.5 401.5,578.5 402.5,562.5 403.5,582.5 404.5,578.5 405.5,566.5 406.5,564.5 407.5,574.5 408.5,559.5 409.5,559.5 410.5,560.5 411.5,556.5 412.5,562.5 413.5,568.5 414.5,564.5 415.5,566.5 416.5,582.5 417.5,564.5 418.5,553.5 419.5,557.5 420.5,572.5 421.5,561.5 422.5,567.5 423.5,556.5 424.5,559.5 425.5,573.5 426.5,567.5 427.5,576.5 428.5,568.5 429.5,566.5 430.5,564.5 431.5,565.5 432.5,570.5 433.5,577.5 434.5,567.5 435.5,574.5 436.5,555.5 437.5,553.5 438.5,553.5 439.5,572.5 440.5,555.5 441.5,569.5 442.5,575.5 443.5,557.5 444.5,517.5 445.5,577.5 446.5,555.5 447.5,564.5 448.5,556.5 449.5,582.5 450.5,565.5 451.5,551.5 452.5,567.5 453.5,552.5 454.5,571.5 455.5,553.5 456.5,551.5 457.5,557.5 458.5,561.5 459.5,572.5 460.5,554.5 461.5,565.5 462.5,582.5 463.5,568.5 464.5,551.5 465.5,566.5 466.5,551.5 467.5,551.5 468.5,561.5 469.5,564.5 470.5,556.5 471.5,563.5 472.5,551.5 473.5,550.5 474.5,557.5 475.5,569.5 476.5,562.5 477.5,582.5 478.5,582.5 479.5,568.5 480.5,553.5 481.5,573.5 482.5,570.5 483.5,561.5 484.5,558.5 485.5,566.5 486.5,557.5 487.5,567.5 488.5,558.5 489.5,548.5 490.5,549.5 491.5,554.5 492.5,549.5 493.5,571.5 494.5,554.5 495.5,555.5 496.5,551.5 497.5,554.5 498.5,573.5 499.5,553.5 500.5,507.5 501.5,546.5 502.5,559.5 503.5,551.5 504.5,545.5 505.5,547.5 506.5,582.5 507.5,552.5 508.5,560.5 509.5,564.5 510.5,563.5 510.5,471.5 511.5,471.5 511.5,379.5 511.5,471.5 512.5,471.5 512.5,570.5 513.5,562.5 514.5,542.5 515.5,566.5 516.5,561.5 517.5,544.5 518.5,554.5 519.5,563.5 520.5,556.5 521.5,558.5 522.5,582.5 523.5,541.5 524.5,540.5 525.5,496.5 526.5,555.5 527.5,582.5 528.5,560.5 529.5,550.5 530.5,555.5 531.5,556.5 532.5,538.5 533.5,555.5 533.5,491.5 534.5,491.5 534.5,416.5 534.5,491.5 535.5,491.5 535.5,546.5 536.5,545.5 537.5,553.5 538.5,548.5 539.5,538.5 540.5,550.5 541.5,515.5 542.5,538.5 542.5,479.5 543.5,479.5 543.5,430.5 543.5,479.5 544.5,479.5 544.5,549.5 545.5,544.5 546.5,543.5 546.5,401.5 547.5,401.5 547.5,306.5 547.5,401.5 548.5,401.5 548.5,558.5 549.5,538.5 550.5,392.5 551.5,543.5 552.5,538.5 553.5,538.5 554.5,538.5 555.5,559.5 556.5,555.5 557.5,517.5 558.5,538.5 559.5,582.5 560.5,538.5 561.5,545.5 562.5,524.5 563.5,541.5 564.5,538.5 565.5,557.5 566.5,561.5 567.5,560.5 568.5,546.5 569.5,565.5 570.5,528.5 571.5,582.5 572.5,541.5 573.5,547.5 574.5,547.5 575.5,555.5 576.5,552.5 577.5,567.5 578.5,561.5 579.5,570.5 580.5,582.5 581.5,566.5 582.5,567.5 583.5,582.5 584.5,544.5 585.5,562.5 586.5,558.5 587.5,576.5 588.5,567.5 589.5,565.5 590.5,555.5 591.5,556.5 592.5,564.5 593.5,574.5 594.5,563.5 595.5,556.5 596.5,560.5 597.5,558.5 598.5,566.5 599.5,571.5 600.5,562.5 601.5,562.5 602.5,554.5 603.5,577.5 604.5,565.5 605.5,574.5 606.5,560.5 607.5,563.5 608.5,577.5 609.5,582.5 610.5,554.5 611.5,575.5 612.5,582.5 613.5,563.5 614.5,574.5 615.5,578.5 616.5,557.5 617.5,567.5 618.5,577.5 619.5,570.5 620.5,566.5 621.5,556.5 622.5,561.5 623.5,571.5 624.5,559.5 625.5,571.5 626.5,559.5 627.5,568.5 628.5,565.5 629.5,582.5 630.5,563.5 631.5,578.5 632.5,577.5 633.5,562.5 634.5,579.5 635.5,582.5 636.5,569.5 637.5,543.5 638.5,572.5 639.5,582.5 640.5,565.5 641.5,573.5 642.5,576.5 643.5,569.5 644.5,579.5 645.5,576.5 646.5,564.5 647.5,565.5 648.5,570.5 649.5,564.5 650.5,573.5 651.5,563.5 652.5,564.5 653.5,582.5 654.5,562.5 655.5,578.5 656.5,575.5 657.5,579.5 658.5,565.5 659.5,582.5 660.5,574.5 661.5,569.5 662.5,582.5 663.5,567.5 664.5,580.5 665.5,580.5 666.5,547.5 667.5,578.5 668.5,564.5 669.5,570.5 670.5,566.5 671.5,582.5 672.5,571.5 673.5,582.5 674.5,564.5 675.5,580.5 676.5,577.5 676.5,457.5 677.5,457.5 677.5,350.5 677.5,457.5 678.5,457.5 678.5,581.5 679.5,569.5 680.5,570.5 681.5,565.5 682.5,580.5 683.5,582.5 684.5,569.5 685.5,581.5 686.5,572.5 687.5,573.5 688.5,580.5 689.5,579.5 690.5,579.5 691.5,576.5 692.5,571.5 693.5,579.5 694.5,570.5 695.5,571.5 696.5,568.5 697.5,572.5 698.5,580.5 699.5,572.5 700.5,569.5 701.5,578.5 702.5,572.5 703.5,577.5 704.5,579.5 705.5,578.5 706.5,580.5 707.5,577.5 708.5,579.5 709.5,573.5 710.5,572.5 711.5,577.5 712.5,575.5 713.5,577.5 714.5,580.5 715.5,582.5 716.5,577.5 717.5,580.5 718.5,565.5 719.5,574.5 720.5,582.5 721.5,581.5 722.5,581.5 723.5,576.5 724.5,582.5 725.5,580.5 725.5,582" fill="url(#sf)"/><polyline points="290.5,576.5 291.5,580.5 292.5,579.5 293.5,575.5 294.5,574.5 295.5,574.5 296.5,576.5 297.5,573.5 298.5,578.5 299.5,577.5 300.5,582.5 301.5,580.5 302.5,571.5 303.5,573.5 304.5,571.5 305.5,577.5 306.5,575.5 307.5,568.5 308.5,577.5 309.5,571.5 310.5,573.5 311.5,578.5 312.5,569.5 313.5,562.5 314.5,577.5 315.5,581.5 316.5,571.5 317.5,566.5 318.5,563.5 319.5,577.5 320.5,579.5 321.5,575.5 322.5,573.5 323.5,578.5 324.5,570.5 325.5,561.5 326.5,573.5 327.5,577.5 328.5,567.5 329.5,559.5 330.5,562.5 331.5,559.5 332.5,560.5 333.5,566.5 334.5,559.5 335.5,569.5 336.5,576.5 337.5,562.5 338.5,564.5 339.5,578.5 340.5,559.5 341.5,560.5 342.5,569.5 343.5,554.5 344.5,563.5 345.5,578.5 346.5,566.5 347.5,550.5 348.5,576.5 349.5,575.5 350.5,563.5 351.5,555.5 352.5,554.5 353.5,558.5 354.5,582.5 355.5,552.5 356.5,555.5 357.5,553.5 358.5,568.5 359.5,559.5 360.5,561.5 361.5,574.5 362.5,564.5 363.5,554.5 364.5,561.5 365.5,574.5 366.5,553.5 367.5,566.5 368.5,582.5 369.5,566.5 370.5,575.5 371.5,559.5 372.5,557.5 373.5,566.5 374.5,561.5 375.5,573.5 376.5,574.5 377.5,574.5 378.5,558.5 379.5,582.5 380.5,553.5 381.5,559.5 382.5,577.5 383.5,577.5 384.5,577.5 385.5,558.5 386.5,558.5 387.5,569.5 388.5,574.5 389.5,569.5 390.5,555.5 391.5,576.5 392.5,572.5 393.5,557.5 394.5,561.5 395.5,578.5 396.5,563.5 397.5,549.5 398.5,556.5 399.5,576.5 400.5,556.5 401.5,578.5 402.5,562.5 403.5,582.5 404.5,578.5 405.5,566.5 406.5,564.5 407.5,574.5 408.5,559.5 409.5,559.5 410.5,560.5 411.5,556.5 412.5,562.5 413.5,568.5 414.5,564.5 415.5,566.5 416.5,582.5 417.5,564.5 418.5,553.5 419.5,557.5 420.5,572.5 421.5,561.5 422.5,567.5 423.5,556.5 424.5,559.5 425.5,573.5 426.5,567.5 427.5,576.5 428.5,568.5 429.5,566.5 430.5,564.5 431.5,565.5 432.5,570.5 433.5,577.5 434.5,567.5 435.5,574.5 436.5,555.5 437.5,553.5 438.5,553.5 439.5,572.5 440.5,555.5 441.5,569.5 442.5,575.5 443.5,557.5 444.5,517.5 445.5,577.5 446.5,555.5 447.5,564.5 448.5,556.5 449.5,582.5 450.5,565.5 451.5,551.5 452.5,567.5 453.5,552.5 454.5,571.5 455.5,553.5 456.5,551.5 457.5,557.5 458.5,561.5 459.5,572.5 460.5,554.5 461.5,565.5 462.5,582.5 463.5,568.5 464.5,551.5 465.5,566.5 466.5,551.5 467.5,551.5 468.5,561.5 469.5,564.5 470.5,556.5 471.5,563.5 472.5,551.5 473.5,550.5 474.5,557.5 475.5,569.5 476.5,562.5 477.5,582.5 478.5,582.5 479.5,568.5 480.5,553.5 481.5,573.5 482.5,570.5 483.5,561.5 484.5,558.5 485.5,566.5 486.5,557.5 487.5,567.5 488.5,558.5 489.5,548.5 490.5,549.5 491.5,554.5 492.5,549.5 493.5,571.5 494.5,554.5 495.5,555.5 496.5,551.5 497.5,554.5 498.5,573.5 499.5,553.5 500.5,507.5 501.5,546.5 502.5,559.5 503.5,551.5 504.5,545.5 505.5,547.5 506.5,582.5 507.5,552.5 508.5,560.5 509.5,564.5 510.5,563.5 510.5,471.5 511.5,471.5 511.5,379.5 511.5,471.5 512.5,471.5 512.5,570.5 513.5,562.5 514.5,542.5 515.5,566.5 516.5,561.5 517.5,544.5 518.5,554.5 519.5,563.5 520.5,556.5 521.5,558.5 522.5,582.5 523.5,541.5 524.5,540.5 525.5,496.5 526.5,555.5 527.5,582.5 528.5,560.5 529.5,550.5 530.5,555.5 531.5,556.5 532.5,538.5 533.5,555.5 533.5,491.5 534.5,491.5 534.5,416.5 534.5,491.5 535.5,491.5 535.5,546.5 536.5,545.5 537.5,553.5 538.5,548.5 539.5,538.5 540.5,550.5 541.5,515.5 542.5,538.5 542.5,479.5 543.5,479.5 543.5,430.5 543.5,479.5 544.5,479.5 544.5,549.5 545.5,544.5 546.5,543.5 546.5,401.5 547.5,401.5 547.5,306.5 547.5,401.5 548.5,401.5 548.5,558.5 549.5,538.5 550.5,392.5 551.5,543.5 552.5,538.5 553.5,538.5 554.5,538.5 555.5,559.5 556.5,555.5 557.5,517.5 558.5,538.5 559.5,582.5 560.5,538.5 561.5,545.5 562.5,524.5 563.5,541.5 564.5,538.5 565.5,557.5 566.5,561.5 567.5,560.5 568.5,546.5 569.5,565.5 570.5,528.5 571.5,582.5 572.5,541.5 573.5,547.5 574.5,547.5 575.5,555.5 576.5,552.5 577.5,567.5 578.5,561.5 579.5,570.5 580.5,582.5 581.5,566.5 582.5,567.5 583.5,582.5 584.5,544.5 585.5,562.5 586.5,558.5 587.5,576.5 588.5,567.5 589.5,565.5 590.5,555.5 591.5,556.5 592.5,564.5 593.5,574.5 594.5,563.5 595.5,556.5 596.5,560.5 597.5,558.5 598.5,566.5 599.5,571.5 600.5,562.5 601.5,562.5 602.5,554.5 603.5,577.5 604.5,565.5 605.5,574.5 606.5,560.5 607.5,563.5 608.5,577.5 609.5,582.5 610.5,554.5 611.5,575.5 612.5,582.5 613.5,563.5 614.5,574.5 615.5,578.5 616.5,557.5 617.5,567.5 618.5,577.5 619.5,570.5 620.5,566.5 621.5,556.5 622.5,561.5 623.5,571.5 624.5,559.5 625.5,571.5 626.5,559.5 627.5,568.5 628.5,565.5 629.5,582.5 630.5,563.5 631.5,578.5 632.5,577.5 633.5,562.5 634.5,579.5 635.5,582.5 636.5,569.5 637.5,543.5 638.5,572.5 639.5,582.5 640.5,565.5 641.5,573.5 642.5,576.5 643.5,569.5 644.5,579.5 645.5,576.5 646.5,564.5 647.5,565.5 648.5,570.5 649.5,564.5 650.5,573.5 651.5,563.5 652.5,564.5 653.5,582.5 654.5,562.5 655.5,578.5 656.5,575.5 657.5,579.5 658.5,565.5 659.5,582.5 660.5,574.5 661.5,569.5 662.5,582.5 663.5,567.5 664.5,580.5 665.5,580.5 666.5,547.5 667.5,578.5 668.5,564.5 669.5,570.5 670.5,566.5 671.5,582.5 672.5,571.5 673.5,582.5 674.5,564.5 675.5,580.5 676.5,577.5 676.5,457.5 677.5,457.5 677.5,350.5 677.5,457.5 678.5,457.5 678.5,581.5 679.5,569.5 680.5,570.5 681.5,565.5 682.5,580.5 683.5,582.5 684.5,569.5 685.5,581.5 686.5,572.5 687.5,573.5 688.5,580.5 689.5,579.5 690.5,579.5 691.5,576.5 692.5,571.5 693.5,579.5 694.5,570.5 695.5,571.5 696.5,568.5 697.5,572.5 698.5,580.5 699.5,572.5 700.5,569.5 701.5,578.5 702.5,572.5 703.5,577.5 704.5,579.5 705.5,578.5 706.5,580.5 707.5,577.5 708.5,579.5 709.5,573.5 710.5,572.5 711.5,577.5 712.5,575.5 713.5,577.5 714.5,580.5 715.5,582.5 716.5,577.5 717.5,580.5 718.5,565.5 719.5,574.5 720.5,582.5 721.5,581.5 722.5,581.5 723.5,576.5 724.5,582.5 725.5,580.5" fill="none" stroke="#fff" stroke-width="1" shape-rendering="crispEdges"/><path d="M543.5 65V612" stroke="#1c2a2a" stroke-width="1"/><path d="M544.5 65V612" stroke="#ff0000" stroke-width="1"/></svg>
<div class="sl" style="right:538px;top:90px">0</div>
<div class="sl" style="right:538px;top:171px">-10</div>
<div class="sl" style="right:538px;top:252px">-20</div>
<div class="sl" style="right:538px;top:333px">-30</div>
<div class="sl" style="right:538px;top:414px">-40</div>
<div class="sl" style="right:538px;top:495px">-50</div>
<div class="sl" style="right:538px;top:576px">-60</div>
<div class="sl" style="left:274px;width:118px;text-align:center;top:592px">434kHz</div>
<div class="sl" style="left:366px;width:118px;text-align:center;top:592px">868kHz</div>
<div class="sl" style="left:458px;width:118px;text-align:center;top:592px">1 302kHz</div>
<div class="sl" style="left:550px;width:118px;text-align:center;top:592px">1 736kHz</div>
<div class="sl" style="left:643px;width:118px;text-align:center;top:592px">2 170kHz</div>
<div style="left:260px;top:616px;width:495px;height:47px;background:#000;"></div>
<svg style="left:0;top:0" width="823" height="679" shape-rendering="crispEdges"><rect x="290" y="616" width="435" height="47" fill="#8080f8"/><path d="M316 616.5h1M333 616.5h4M343 616.5h1M346 616.5h2M353 616.5h1M356 616.5h2M363 616.5h1M375 616.5h1M378 616.5h1M382 616.5h3M386 616.5h1M388 616.5h2M396 616.5h1M398 616.5h2M402 616.5h3M408 616.5h1M412 616.5h3M416 616.5h2M423 616.5h3M434 616.5h1M436 616.5h1M438 616.5h5M444 616.5h1M446 616.5h1M452 616.5h5M466 616.5h1M473 616.5h4M480 616.5h1M483 616.5h2M486 616.5h2M490 616.5h1M493 616.5h2M496 616.5h1M499 616.5h1M502 616.5h3M506 616.5h1M508 616.5h1M511 616.5h1M514 616.5h1M517 616.5h1M519 616.5h1M521 616.5h1M525 616.5h2M529 616.5h14M544 616.5h8M553 616.5h3M557 616.5h4M563 616.5h1M572 616.5h3M576 616.5h1M579 616.5h1M583 616.5h2M587 616.5h2M591 616.5h2M594 616.5h1M597 616.5h1M615 616.5h1M621 616.5h1M624 616.5h2M627 616.5h2M632 616.5h1M634 616.5h1M662 616.5h1M665 616.5h2M683 616.5h1M316 617.5h1M333 617.5h2M336 617.5h1M338 617.5h1M341 617.5h1M343 617.5h2M347 617.5h1M352 617.5h2M356 617.5h2M360 617.5h2M364 617.5h1M366 617.5h1M372 617.5h2M375 617.5h1M381 617.5h2M385 617.5h1M388 617.5h6M395 617.5h2M398 617.5h2M402 617.5h1M404 617.5h1M406 617.5h3M410 617.5h1M412 617.5h3M416 617.5h3M420 617.5h2M423 617.5h2M429 617.5h2M432 617.5h2M436 617.5h3M442 617.5h2M445 617.5h4M451 617.5h5M457 617.5h2M461 617.5h1M466 617.5h1M468 617.5h2M472 617.5h1M474 617.5h5M483 617.5h1M486 617.5h2M489 617.5h6M497 617.5h1M499 617.5h1M502 617.5h4M509 617.5h4M516 617.5h1M519 617.5h1M521 617.5h2M524 617.5h3M528 617.5h9M538 617.5h3M545 617.5h2M548 617.5h2M551 617.5h4M557 617.5h1M560 617.5h1M564 617.5h1M566 617.5h1M568 617.5h1M572 617.5h3M576 617.5h1M578 617.5h3M585 617.5h3M591 617.5h2M594 617.5h1M596 617.5h1M599 617.5h1M602 617.5h2M606 617.5h2M610 617.5h1M613 617.5h1M615 617.5h1M621 617.5h1M624 617.5h1M627 617.5h1M632 617.5h1M638 617.5h2M647 617.5h1M650 617.5h1M658 617.5h2M663 617.5h1M665 617.5h2M672 617.5h1M683 617.5h1M685 617.5h1M316 618.5h1M330 618.5h1M333 618.5h1M338 618.5h1M341 618.5h1M343 618.5h2M347 618.5h1M350 618.5h1M352 618.5h1M356 618.5h2M366 618.5h1M372 618.5h3M376 618.5h3M380 618.5h4M388 618.5h1M391 618.5h1M393 618.5h4M398 618.5h1M404 618.5h2M408 618.5h1M410 618.5h2M413 618.5h2M416 618.5h1M418 618.5h1M420 618.5h2M423 618.5h1M427 618.5h1M429 618.5h4M436 618.5h1M438 618.5h2M442 618.5h5M448 618.5h1M451 618.5h2M454 618.5h1M456 618.5h3M460 618.5h5M466 618.5h3M470 618.5h6M484 618.5h4M489 618.5h7M497 618.5h1M499 618.5h1M502 618.5h1M504 618.5h1M507 618.5h1M509 618.5h4M516 618.5h3M521 618.5h1M524 618.5h3M528 618.5h3M532 618.5h7M541 618.5h4M546 618.5h2M550 618.5h13M564 618.5h1M566 618.5h1M572 618.5h2M577 618.5h1M579 618.5h1M583 618.5h1M587 618.5h4M592 618.5h2M600 618.5h2M604 618.5h1M606 618.5h1M608 618.5h1M615 618.5h1M618 618.5h1M622 618.5h1M624 618.5h1M626 618.5h2M630 618.5h1M632 618.5h1M636 618.5h1M647 618.5h2M650 618.5h2M660 618.5h1M663 618.5h1M665 618.5h2M670 618.5h1M672 618.5h1M683 618.5h1M685 618.5h1M291 619.5h1M316 619.5h1M326 619.5h1M332 619.5h2M336 619.5h1M341 619.5h1M344 619.5h1M347 619.5h1M349 619.5h1M353 619.5h1M356 619.5h2M368 619.5h1M371 619.5h3M376 619.5h3M381 619.5h2M384 619.5h1M388 619.5h1M391 619.5h2M394 619.5h3M398 619.5h1M402 619.5h1M405 619.5h1M408 619.5h1M410 619.5h1M412 619.5h2M415 619.5h4M420 619.5h2M423 619.5h1M426 619.5h1M429 619.5h8M438 619.5h2M441 619.5h3M446 619.5h3M450 619.5h1M453 619.5h1M456 619.5h3M460 619.5h1M462 619.5h2M466 619.5h11M479 619.5h3M484 619.5h4M489 619.5h1M492 619.5h4M497 619.5h1M500 619.5h1M502 619.5h1M504 619.5h2M507 619.5h1M509 619.5h4M514 619.5h8M523 619.5h1M525 619.5h3M529 619.5h4M534 619.5h7M542 619.5h9M552 619.5h8M561 619.5h4M566 619.5h1M568 619.5h2M573 619.5h2M576 619.5h2M580 619.5h1M583 619.5h2M586 619.5h1M588 619.5h1M591 619.5h1M600 619.5h2M603 619.5h1M608 619.5h1M617 619.5h1M622 619.5h1M626 619.5h3M642 619.5h1M650 619.5h3M659 619.5h3M663 619.5h1M666 619.5h1M671 619.5h2M683 619.5h3M314 620.5h1M316 620.5h1M326 620.5h1M332 620.5h1M336 620.5h2M339 620.5h1M341 620.5h1M343 620.5h1M347 620.5h1M349 620.5h1M351 620.5h3M356 620.5h2M359 620.5h2M367 620.5h3M371 620.5h1M373 620.5h1M375 620.5h3M381 620.5h4M388 620.5h1M391 620.5h1M393 620.5h1M395 620.5h1M398 620.5h1M401 620.5h1M405 620.5h1M408 620.5h1M410 620.5h1M412 620.5h1M415 620.5h1M418 620.5h3M422 620.5h6M429 620.5h3M433 620.5h4M438 620.5h2M441 620.5h1M443 620.5h5M449 620.5h1M451 620.5h1M453 620.5h1M456 620.5h1M458 620.5h3M462 620.5h2M465 620.5h3M469 620.5h3M473 620.5h1M475 620.5h3M479 620.5h10M490 620.5h1M492 620.5h2M495 620.5h1M497 620.5h5M505 620.5h1M507 620.5h1M509 620.5h4M515 620.5h4M520 620.5h2M523 620.5h2M526 620.5h1M528 620.5h5M534 620.5h5M540 620.5h2M543 620.5h2M547 620.5h4M552 620.5h4M557 620.5h2M561 620.5h2M564 620.5h6M573 620.5h3M579 620.5h2M583 620.5h2M587 620.5h1M596 620.5h1M600 620.5h2M610 620.5h1M616 620.5h1M620 620.5h1M625 620.5h1M627 620.5h1M631 620.5h3M635 620.5h1M642 620.5h1M651 620.5h2M654 620.5h1M657 620.5h2M660 620.5h2M663 620.5h3M667 620.5h2M674 620.5h1M684 620.5h2M317 621.5h1M329 621.5h2M334 621.5h1M338 621.5h1M340 621.5h2M346 621.5h2M349 621.5h1M351 621.5h3M356 621.5h2M359 621.5h2M364 621.5h1M369 621.5h1M381 621.5h2M384 621.5h2M388 621.5h2M391 621.5h1M394 621.5h1M396 621.5h3M401 621.5h2M405 621.5h1M410 621.5h4M415 621.5h1M418 621.5h1M422 621.5h4M427 621.5h5M433 621.5h4M438 621.5h1M440 621.5h4M445 621.5h5M452 621.5h2M458 621.5h1M460 621.5h1M463 621.5h1M467 621.5h2M470 621.5h2M473 621.5h1M476 621.5h2M479 621.5h4M484 621.5h1M486 621.5h3M490 621.5h5M496 621.5h1M501 621.5h1M504 621.5h2M507 621.5h2M511 621.5h1M515 621.5h2M518 621.5h4M523 621.5h2M526 621.5h2M529 621.5h16M548 621.5h12M561 621.5h1M563 621.5h3M568 621.5h2M574 621.5h2M577 621.5h1M579 621.5h1M581 621.5h1M583 621.5h6M590 621.5h1M592 621.5h1M596 621.5h1M600 621.5h1M609 621.5h1M614 621.5h1M616 621.5h1M620 621.5h1M633 621.5h1M635 621.5h2M643 621.5h1M647 621.5h1M649 621.5h1M651 621.5h1M654 621.5h1M658 621.5h1M660 621.5h2M663 621.5h1M665 621.5h1M667 621.5h1M672 621.5h1M674 621.5h1M676 621.5h1M682 621.5h1M685 621.5h1M709 621.5h1M719 621.5h1M326 622.5h2M329 622.5h2M334 622.5h1M338 622.5h2M341 622.5h2M346 622.5h2M349 622.5h4M356 622.5h2M359 622.5h3M363 622.5h2M366 622.5h1M370 622.5h2M374 622.5h1M376 622.5h1M381 622.5h4M386 622.5h4M391 622.5h1M394 622.5h2M401 622.5h1M404 622.5h1M407 622.5h1M409 622.5h2M412 622.5h4M417 622.5h1M419 622.5h1M422 622.5h2M425 622.5h2M429 622.5h1M431 622.5h1M434 622.5h2M440 622.5h4M445 622.5h2M448 622.5h1M452 622.5h2M455 622.5h1M458 622.5h4M463 622.5h1M468 622.5h1M470 622.5h2M474 622.5h1M477 622.5h1M479 622.5h3M484 622.5h2M488 622.5h10M503 622.5h3M507 622.5h2M510 622.5h3M516 622.5h1M518 622.5h1M521 622.5h1M524 622.5h1M527 622.5h1M529 622.5h1M532 622.5h10M544 622.5h8M553 622.5h1M555 622.5h1M557 622.5h1M559 622.5h5M568 622.5h1M574 622.5h6M581 622.5h1M583 622.5h1M587 622.5h2M590 622.5h3M595 622.5h2M602 622.5h3M608 622.5h3M613 622.5h2M620 622.5h1M623 622.5h1M628 622.5h1M633 622.5h1M635 622.5h2M639 622.5h1M647 622.5h1M649 622.5h1M651 622.5h2M658 622.5h1M664 622.5h1M668 622.5h1M672 622.5h1M674 622.5h3M680 622.5h1M682 622.5h1M684 622.5h1M716 622.5h1M719 622.5h1M313 623.5h1M325 623.5h2M329 623.5h1M332 623.5h1M339 623.5h2M342 623.5h1M344 623.5h4M351 623.5h2M357 623.5h1M359 623.5h2M362 623.5h3M366 623.5h1M372 623.5h1M374 623.5h2M382 623.5h2M386 623.5h1M388 623.5h1M391 623.5h1M393 623.5h1M397 623.5h1M400 623.5h3M404 623.5h2M413 623.5h3M417 623.5h1M419 623.5h1M421 623.5h3M425 623.5h1M428 623.5h2M432 623.5h1M434 623.5h2M438 623.5h4M443 623.5h3M448 623.5h1M450 623.5h1M453 623.5h3M459 623.5h3M464 623.5h1M466 623.5h1M470 623.5h1M474 623.5h1M477 623.5h10M488 623.5h3M492 623.5h3M497 623.5h2M501 623.5h2M505 623.5h1M507 623.5h2M510 623.5h5M518 623.5h2M521 623.5h1M524 623.5h1M526 623.5h2M530 623.5h4M536 623.5h3M541 623.5h8M550 623.5h3M555 623.5h8M565 623.5h5M571 623.5h12M585 623.5h2M590 623.5h3M595 623.5h2M598 623.5h2M603 623.5h2M608 623.5h1M611 623.5h1M613 623.5h1M621 623.5h1M623 623.5h1M625 623.5h1M633 623.5h1M635 623.5h1M637 623.5h3M642 623.5h1M648 623.5h4M659 623.5h1M662 623.5h1M665 623.5h1M668 623.5h1M674 623.5h1M676 623.5h1M683 623.5h2M317 624.5h1M325 624.5h2M329 624.5h1M335 624.5h1M339 624.5h1M342 624.5h1M345 624.5h2M348 624.5h1M351 624.5h2M354 624.5h1M357 624.5h1M359 624.5h1M361 624.5h1M363 624.5h2M366 624.5h1M371 624.5h2M374 624.5h2M378 624.5h2M382 624.5h2M385 624.5h2M388 624.5h1M391 624.5h1M395 624.5h1M397 624.5h1M400 624.5h1M404 624.5h2M409 624.5h3M413 624.5h3M418 624.5h7M426 624.5h6M434 624.5h1M436 624.5h3M441 624.5h1M443 624.5h4M448 624.5h1M450 624.5h1M454 624.5h2M458 624.5h4M464 624.5h1M466 624.5h3M470 624.5h1M473 624.5h2M477 624.5h2M480 624.5h4M486 624.5h5M492 624.5h2M496 624.5h1M499 624.5h1M502 624.5h1M504 624.5h5M510 624.5h2M513 624.5h1M515 624.5h5M523 624.5h2M526 624.5h2M529 624.5h4M534 624.5h5M540 624.5h3M544 624.5h3M548 624.5h16M567 624.5h3M571 624.5h4M576 624.5h2M579 624.5h3M585 624.5h1M587 624.5h5M595 624.5h1M598 624.5h1M601 624.5h1M604 624.5h1M607 624.5h2M610 624.5h2M613 624.5h1M617 624.5h5M623 624.5h1M627 624.5h1M633 624.5h1M635 624.5h1M641 624.5h2M645 624.5h1M649 624.5h3M653 624.5h1M662 624.5h1M665 624.5h1M668 624.5h1M674 624.5h1M676 624.5h1M317 625.5h1M319 625.5h1M325 625.5h2M329 625.5h1M335 625.5h1M342 625.5h1M346 625.5h1M351 625.5h1M354 625.5h2M357 625.5h3M362 625.5h4M367 625.5h3M371 625.5h2M374 625.5h2M378 625.5h1M382 625.5h3M388 625.5h2M391 625.5h2M395 625.5h1M397 625.5h1M401 625.5h2M404 625.5h2M407 625.5h1M411 625.5h1M413 625.5h11M427 625.5h3M431 625.5h1M433 625.5h2M437 625.5h1M439 625.5h1M443 625.5h1M446 625.5h1M448 625.5h1M450 625.5h2M453 625.5h1M456 625.5h1M459 625.5h4M465 625.5h6M472 625.5h1M474 625.5h1M478 625.5h1M481 625.5h3M486 625.5h9M496 625.5h1M498 625.5h3M503 625.5h2M506 625.5h3M510 625.5h10M521 625.5h1M523 625.5h2M526 625.5h14M541 625.5h3M545 625.5h14M562 625.5h1M564 625.5h1M567 625.5h1M569 625.5h2M574 625.5h1M576 625.5h2M581 625.5h1M584 625.5h2M587 625.5h2M590 625.5h2M594 625.5h2M598 625.5h2M602 625.5h1M605 625.5h1M607 625.5h2M611 625.5h1M613 625.5h2M617 625.5h2M623 625.5h1M627 625.5h2M630 625.5h1M633 625.5h1M641 625.5h2M644 625.5h2M648 625.5h3M662 625.5h1M665 625.5h1M668 625.5h1M674 625.5h1M676 625.5h2M710 625.5h1M310 626.5h1M323 626.5h1M325 626.5h1M333 626.5h1M336 626.5h3M341 626.5h2M353 626.5h1M358 626.5h2M361 626.5h1M363 626.5h7M371 626.5h1M374 626.5h1M377 626.5h2M382 626.5h3M386 626.5h1M388 626.5h2M391 626.5h3M395 626.5h3M399 626.5h1M401 626.5h8M410 626.5h3M414 626.5h1M416 626.5h2M419 626.5h1M421 626.5h3M425 626.5h1M428 626.5h5M434 626.5h2M437 626.5h1M439 626.5h3M444 626.5h1M446 626.5h1M448 626.5h1M451 626.5h4M456 626.5h1M458 626.5h5M464 626.5h2M467 626.5h2M470 626.5h3M474 626.5h1M477 626.5h2M481 626.5h3M486 626.5h1M488 626.5h3M493 626.5h1M498 626.5h4M503 626.5h1M505 626.5h1M508 626.5h1M511 626.5h3M515 626.5h3M519 626.5h2M522 626.5h7M530 626.5h4M535 626.5h5M542 626.5h3M547 626.5h5M554 626.5h2M557 626.5h1M564 626.5h1M570 626.5h1M573 626.5h7M582 626.5h1M585 626.5h1M587 626.5h2M591 626.5h1M594 626.5h1M598 626.5h3M602 626.5h2M605 626.5h1M607 626.5h1M611 626.5h1M614 626.5h1M618 626.5h1M625 626.5h1M627 626.5h1M632 626.5h2M642 626.5h1M647 626.5h2M650 626.5h1M654 626.5h1M656 626.5h1M665 626.5h1M672 626.5h1M674 626.5h1M676 626.5h2M679 626.5h1M691 626.5h1M710 626.5h1M317 627.5h1M325 627.5h1M333 627.5h1M336 627.5h3M340 627.5h2M344 627.5h2M347 627.5h2M354 627.5h1M359 627.5h1M361 627.5h1M364 627.5h3M370 627.5h3M374 627.5h2M377 627.5h2M381 627.5h1M384 627.5h3M388 627.5h1M390 627.5h3M394 627.5h1M396 627.5h1M398 627.5h6M405 627.5h3M409 627.5h4M414 627.5h1M416 627.5h4M421 627.5h1M423 627.5h3M427 627.5h6M434 627.5h1M437 627.5h3M444 627.5h3M451 627.5h2M454 627.5h1M457 627.5h2M460 627.5h1M462 627.5h1M464 627.5h2M468 627.5h3M474 627.5h3M478 627.5h1M482 627.5h5M488 627.5h4M493 627.5h1M498 627.5h4M503 627.5h3M508 627.5h1M510 627.5h8M519 627.5h1M521 627.5h8M531 627.5h17M549 627.5h9M559 627.5h3M563 627.5h3M569 627.5h1M572 627.5h1M576 627.5h1M579 627.5h4M588 627.5h1M590 627.5h1M598 627.5h1M602 627.5h2M605 627.5h1M607 627.5h2M611 627.5h1M620 627.5h1M623 627.5h1M627 627.5h1M629 627.5h1M635 627.5h1M640 627.5h1M643 627.5h1M647 627.5h2M650 627.5h1M653 627.5h2M659 627.5h1M664 627.5h2M671 627.5h1M674 627.5h1M676 627.5h1M679 627.5h1M710 627.5h1M310 628.5h1M325 628.5h1M327 628.5h1M330 628.5h2M340 628.5h1M344 628.5h1M347 628.5h2M351 628.5h4M356 628.5h3M361 628.5h1M364 628.5h1M366 628.5h1M370 628.5h1M372 628.5h3M377 628.5h4M383 628.5h4M388 628.5h1M390 628.5h1M392 628.5h1M395 628.5h2M399 628.5h1M401 628.5h1M403 628.5h8M412 628.5h1M417 628.5h8M427 628.5h1M429 628.5h4M434 628.5h1M437 628.5h1M439 628.5h1M441 628.5h1M444 628.5h2M448 628.5h2M451 628.5h1M455 628.5h1M460 628.5h1M464 628.5h4M470 628.5h1M475 628.5h2M479 628.5h2M482 628.5h7M492 628.5h1M498 628.5h2M501 628.5h3M508 628.5h5M514 628.5h22M537 628.5h11M549 628.5h1M551 628.5h4M556 628.5h3M560 628.5h1M563 628.5h4M569 628.5h3M573 628.5h2M580 628.5h3M595 628.5h1M597 628.5h1M599 628.5h2M602 628.5h2M605 628.5h1M607 628.5h2M614 628.5h1M623 628.5h3M629 628.5h1M636 628.5h2M642 628.5h2M647 628.5h1M650 628.5h1M653 628.5h1M658 628.5h1M665 628.5h1M670 628.5h1M672 628.5h1M676 628.5h1M710 628.5h1M310 629.5h1M320 629.5h1M322 629.5h1M327 629.5h1M331 629.5h1M333 629.5h2M345 629.5h1M347 629.5h3M351 629.5h3M355 629.5h4M361 629.5h1M363 629.5h2M366 629.5h1M369 629.5h2M377 629.5h2M382 629.5h4M392 629.5h1M394 629.5h3M399 629.5h1M401 629.5h1M404 629.5h1M406 629.5h1M408 629.5h1M410 629.5h2M415 629.5h1M418 629.5h1M422 629.5h1M427 629.5h1M429 629.5h4M435 629.5h2M438 629.5h1M441 629.5h2M444 629.5h2M447 629.5h2M451 629.5h1M453 629.5h1M455 629.5h1M457 629.5h1M460 629.5h1M463 629.5h6M470 629.5h2M473 629.5h1M475 629.5h2M478 629.5h1M480 629.5h1M485 629.5h2M489 629.5h3M493 629.5h1M496 629.5h4M501 629.5h4M506 629.5h7M514 629.5h4M519 629.5h1M521 629.5h1M524 629.5h17M542 629.5h5M548 629.5h5M554 629.5h4M559 629.5h2M562 629.5h1M565 629.5h1M569 629.5h4M576 629.5h1M579 629.5h1M581 629.5h2M584 629.5h1M586 629.5h1M589 629.5h1M591 629.5h2M594 629.5h2M597 629.5h2M600 629.5h6M607 629.5h1M612 629.5h1M614 629.5h2M621 629.5h2M625 629.5h3M629 629.5h2M632 629.5h1M635 629.5h3M647 629.5h1M651 629.5h3M656 629.5h1M659 629.5h1M663 629.5h1M665 629.5h1M670 629.5h1M672 629.5h1M676 629.5h1M679 629.5h2M310 630.5h1M322 630.5h1M331 630.5h1M333 630.5h2M338 630.5h1M341 630.5h1M345 630.5h4M352 630.5h2M355 630.5h1M357 630.5h2M360 630.5h3M366 630.5h2M369 630.5h2M373 630.5h1M378 630.5h3M382 630.5h2M385 630.5h1M387 630.5h2M391 630.5h6M401 630.5h1M404 630.5h1M408 630.5h1M411 630.5h1M415 630.5h5M425 630.5h3M431 630.5h2M437 630.5h1M441 630.5h3M445 630.5h1M447 630.5h2M450 630.5h4M456 630.5h3M460 630.5h2M463 630.5h2M466 630.5h2M469 630.5h1M471 630.5h1M474 630.5h1M477 630.5h5M483 630.5h3M487 630.5h4M496 630.5h1M498 630.5h2M502 630.5h3M506 630.5h2M509 630.5h5M515 630.5h3M520 630.5h1M524 630.5h1M526 630.5h6M533 630.5h1M535 630.5h3M539 630.5h9M549 630.5h8M558 630.5h2M562 630.5h1M565 630.5h7M574 630.5h1M576 630.5h3M580 630.5h1M582 630.5h1M584 630.5h1M589 630.5h1M591 630.5h2M597 630.5h1M599 630.5h1M601 630.5h1M603 630.5h2M606 630.5h1M612 630.5h1M615 630.5h1M619 630.5h1M621 630.5h1M625 630.5h3M630 630.5h1M632 630.5h1M634 630.5h4M640 630.5h1M649 630.5h5M656 630.5h2M665 630.5h1M667 630.5h1M676 630.5h1M680 630.5h1M294 631.5h1M310 631.5h1M331 631.5h1M338 631.5h1M342 631.5h2M345 631.5h9M355 631.5h2M360 631.5h1M362 631.5h1M366 631.5h2M370 631.5h1M373 631.5h2M377 631.5h2M380 631.5h1M383 631.5h2M387 631.5h2M390 631.5h2M395 631.5h2M399 631.5h3M403 631.5h2M407 631.5h1M415 631.5h3M419 631.5h1M426 631.5h7M438 631.5h2M442 631.5h2M445 631.5h1M447 631.5h3M451 631.5h1M453 631.5h1M458 631.5h2M461 631.5h7M469 631.5h4M474 631.5h2M478 631.5h1M480 631.5h3M484 631.5h2M488 631.5h4M493 631.5h7M502 631.5h3M507 631.5h1M509 631.5h2M512 631.5h1M516 631.5h2M519 631.5h1M523 631.5h1M526 631.5h2M529 631.5h10M541 631.5h3M545 631.5h1M547 631.5h1M549 631.5h5M555 631.5h1M557 631.5h4M562 631.5h1M564 631.5h1M566 631.5h1M571 631.5h1M573 631.5h1M575 631.5h1M577 631.5h2M580 631.5h7M592 631.5h2M595 631.5h1M600 631.5h1M603 631.5h3M607 631.5h1M612 631.5h1M615 631.5h1M618 631.5h2M621 631.5h1M625 631.5h2M630 631.5h1M632 631.5h1M636 631.5h2M640 631.5h1M648 631.5h6M656 631.5h1M661 631.5h2M667 631.5h1M672 631.5h1M685 631.5h1M689 631.5h1M719 631.5h1M300 632.5h1M310 632.5h1M321 632.5h1M327 632.5h1M335 632.5h1M340 632.5h1M342 632.5h2M345 632.5h2M348 632.5h1M350 632.5h3M355 632.5h2M360 632.5h3M365 632.5h1M369 632.5h1M373 632.5h1M377 632.5h2M380 632.5h3M384 632.5h1M386 632.5h1M388 632.5h1M390 632.5h2M393 632.5h6M401 632.5h1M403 632.5h2M407 632.5h1M409 632.5h1M411 632.5h1M413 632.5h1M415 632.5h2M419 632.5h3M426 632.5h1M429 632.5h5M436 632.5h1M441 632.5h2M444 632.5h2M447 632.5h10M458 632.5h7M466 632.5h2M470 632.5h3M474 632.5h1M478 632.5h2M482 632.5h2M487 632.5h3M491 632.5h1M493 632.5h1M495 632.5h1M497 632.5h1M499 632.5h3M504 632.5h1M507 632.5h3M511 632.5h1M513 632.5h2M516 632.5h7M524 632.5h5M530 632.5h4M535 632.5h1M537 632.5h6M544 632.5h4M549 632.5h2M553 632.5h4M558 632.5h3M563 632.5h3M567 632.5h3M572 632.5h1M578 632.5h1M580 632.5h1M582 632.5h3M586 632.5h1M588 632.5h2M594 632.5h3M602 632.5h1M604 632.5h3M608 632.5h1M616 632.5h1M618 632.5h1M621 632.5h1M623 632.5h1M630 632.5h1M635 632.5h1M637 632.5h1M645 632.5h1M649 632.5h1M651 632.5h1M653 632.5h1M656 632.5h1M658 632.5h1M661 632.5h1M667 632.5h1M674 632.5h1M678 632.5h1M685 632.5h2M689 632.5h1M310 633.5h1M321 633.5h1M330 633.5h1M333 633.5h1M340 633.5h2M345 633.5h4M350 633.5h1M355 633.5h4M360 633.5h2M363 633.5h1M365 633.5h2M368 633.5h1M371 633.5h1M377 633.5h1M379 633.5h4M384 633.5h1M386 633.5h1M389 633.5h1M391 633.5h2M396 633.5h1M398 633.5h1M401 633.5h3M406 633.5h1M409 633.5h5M416 633.5h1M419 633.5h5M426 633.5h1M428 633.5h7M436 633.5h1M438 633.5h8M448 633.5h1M452 633.5h3M458 633.5h3M462 633.5h3M466 633.5h2M477 633.5h1M479 633.5h3M483 633.5h2M486 633.5h1M488 633.5h4M494 633.5h1M496 633.5h2M506 633.5h1M508 633.5h2M511 633.5h4M516 633.5h1M518 633.5h4M523 633.5h1M525 633.5h1M527 633.5h11M539 633.5h7M547 633.5h1M549 633.5h13M563 633.5h1M565 633.5h1M570 633.5h4M575 633.5h1M577 633.5h2M580 633.5h1M582 633.5h4M589 633.5h1M593 633.5h1M597 633.5h1M601 633.5h2M604 633.5h3M608 633.5h1M615 633.5h2M618 633.5h1M628 633.5h1M633 633.5h1M635 633.5h1M637 633.5h1M639 633.5h1M644 633.5h1M649 633.5h1M651 633.5h1M653 633.5h1M656 633.5h4M664 633.5h1M671 633.5h2M682 633.5h1M686 633.5h1M689 633.5h1M319 634.5h1M323 634.5h1M327 634.5h1M330 634.5h4M341 634.5h1M343 634.5h5M350 634.5h1M353 634.5h1M355 634.5h3M360 634.5h1M362 634.5h2M365 634.5h2M368 634.5h2M371 634.5h1M377 634.5h4M384 634.5h1M387 634.5h1M389 634.5h1M391 634.5h2M394 634.5h3M401 634.5h3M406 634.5h1M409 634.5h3M413 634.5h2M416 634.5h2M419 634.5h1M421 634.5h4M428 634.5h2M431 634.5h4M437 634.5h2M440 634.5h5M448 634.5h1M450 634.5h1M457 634.5h3M463 634.5h1M466 634.5h3M472 634.5h3M476 634.5h1M478 634.5h3M482 634.5h1M484 634.5h7M492 634.5h1M494 634.5h4M500 634.5h2M503 634.5h3M507 634.5h2M510 634.5h1M514 634.5h6M521 634.5h2M525 634.5h3M529 634.5h2M532 634.5h8M541 634.5h10M552 634.5h3M556 634.5h3M560 634.5h5M567 634.5h1M569 634.5h3M573 634.5h1M575 634.5h2M578 634.5h1M580 634.5h1M582 634.5h4M587 634.5h1M592 634.5h3M604 634.5h3M608 634.5h1M610 634.5h1M613 634.5h4M618 634.5h1M621 634.5h1M628 634.5h1M631 634.5h1M637 634.5h1M641 634.5h1M644 634.5h1M647 634.5h3M656 634.5h2M659 634.5h1M662 634.5h1M665 634.5h1M671 634.5h2M674 634.5h1M679 634.5h1M682 634.5h1M323 635.5h2M327 635.5h1M332 635.5h1M340 635.5h3M344 635.5h1M350 635.5h2M356 635.5h2M363 635.5h1M366 635.5h1M370 635.5h3M379 635.5h1M387 635.5h1M389 635.5h2M392 635.5h1M395 635.5h4M401 635.5h2M405 635.5h1M411 635.5h1M414 635.5h1M416 635.5h1M419 635.5h1M421 635.5h4M429 635.5h6M442 635.5h3M450 635.5h1M456 635.5h2M459 635.5h2M463 635.5h2M468 635.5h1M471 635.5h3M475 635.5h1M478 635.5h4M483 635.5h1M485 635.5h1M487 635.5h5M493 635.5h4M498 635.5h8M509 635.5h2M512 635.5h1M514 635.5h1M516 635.5h1M518 635.5h2M521 635.5h8M530 635.5h5M536 635.5h2M540 635.5h1M542 635.5h3M546 635.5h2M549 635.5h4M554 635.5h3M558 635.5h11M570 635.5h2M573 635.5h1M575 635.5h1M578 635.5h1M580 635.5h1M582 635.5h5M588 635.5h2M591 635.5h1M593 635.5h2M597 635.5h3M604 635.5h1M606 635.5h1M610 635.5h1M613 635.5h4M618 635.5h1M620 635.5h1M626 635.5h1M631 635.5h1M637 635.5h1M648 635.5h2M654 635.5h1M656 635.5h1M660 635.5h1M664 635.5h2M668 635.5h1M674 635.5h1M676 635.5h1M678 635.5h1M683 635.5h1M690 635.5h1M319 636.5h1M324 636.5h1M328 636.5h1M332 636.5h1M340 636.5h2M345 636.5h2M348 636.5h1M352 636.5h1M354 636.5h1M360 636.5h1M363 636.5h1M366 636.5h1M368 636.5h1M370 636.5h1M372 636.5h1M374 636.5h1M376 636.5h2M379 636.5h3M383 636.5h1M387 636.5h1M390 636.5h3M395 636.5h1M397 636.5h2M400 636.5h1M405 636.5h1M407 636.5h3M411 636.5h3M416 636.5h1M420 636.5h5M429 636.5h7M437 636.5h1M439 636.5h3M443 636.5h1M446 636.5h3M454 636.5h3M459 636.5h2M462 636.5h3M466 636.5h1M468 636.5h2M472 636.5h5M479 636.5h2M482 636.5h3M486 636.5h13M500 636.5h1M502 636.5h1M506 636.5h5M512 636.5h1M514 636.5h5M520 636.5h10M531 636.5h10M543 636.5h1M545 636.5h1M547 636.5h4M553 636.5h6M562 636.5h3M567 636.5h3M572 636.5h1M575 636.5h1M578 636.5h1M580 636.5h1M585 636.5h2M592 636.5h4M598 636.5h1M600 636.5h1M604 636.5h1M606 636.5h2M609 636.5h2M613 636.5h3M620 636.5h2M625 636.5h1M631 636.5h1M635 636.5h1M637 636.5h1M639 636.5h1M642 636.5h1M644 636.5h1M651 636.5h1M655 636.5h2M664 636.5h1M667 636.5h2M676 636.5h1M314 637.5h1M325 637.5h1M327 637.5h2M340 637.5h1M342 637.5h1M344 637.5h4M354 637.5h1M357 637.5h2M360 637.5h1M363 637.5h1M365 637.5h1M368 637.5h1M376 637.5h1M379 637.5h2M382 637.5h2M386 637.5h2M391 637.5h2M394 637.5h1M396 637.5h1M400 637.5h1M402 637.5h1M404 637.5h4M409 637.5h2M412 637.5h2M416 637.5h1M420 637.5h1M422 637.5h1M424 637.5h1M427 637.5h1M430 637.5h4M435 637.5h7M443 637.5h1M446 637.5h3M452 637.5h1M455 637.5h1M457 637.5h8M466 637.5h2M469 637.5h1M472 637.5h2M475 637.5h1M478 637.5h2M482 637.5h4M487 637.5h7M495 637.5h2M498 637.5h3M502 637.5h1M505 637.5h1M507 637.5h2M512 637.5h1M514 637.5h3M518 637.5h1M520 637.5h1M522 637.5h2M525 637.5h3M530 637.5h11M543 637.5h8M552 637.5h2M555 637.5h3M559 637.5h1M561 637.5h2M564 637.5h3M570 637.5h4M575 637.5h1M580 637.5h2M587 637.5h1M594 637.5h5M600 637.5h1M606 637.5h2M609 637.5h1M612 637.5h3M619 637.5h3M623 637.5h1M627 637.5h1M633 637.5h1M635 637.5h1M637 637.5h1M642 637.5h1M644 637.5h1M655 637.5h2M664 637.5h1M668 637.5h2M681 637.5h1M709 637.5h2M327 638.5h3M332 638.5h1M338 638.5h5M344 638.5h2M348 638.5h1M352 638.5h5M358 638.5h1M360 638.5h4M367 638.5h1M379 638.5h2M382 638.5h1M384 638.5h5M391 638.5h2M394 638.5h5M401 638.5h2M404 638.5h2M407 638.5h1M409 638.5h1M412 638.5h3M420 638.5h1M422 638.5h1M424 638.5h1M427 638.5h1M430 638.5h1M433 638.5h1M435 638.5h2M439 638.5h6M446 638.5h1M450 638.5h1M452 638.5h5M458 638.5h7M468 638.5h5M474 638.5h2M479 638.5h4M484 638.5h2M487 638.5h2M491 638.5h1M494 638.5h1M496 638.5h1M499 638.5h2M506 638.5h3M510 638.5h1M512 638.5h2M515 638.5h2M518 638.5h1M521 638.5h1M523 638.5h2M526 638.5h12M539 638.5h1M541 638.5h2M544 638.5h1M546 638.5h4M551 638.5h1M553 638.5h3M557 638.5h6M564 638.5h1M566 638.5h2M570 638.5h1M573 638.5h3M578 638.5h1M580 638.5h1M583 638.5h1M585 638.5h1M587 638.5h1M591 638.5h1M593 638.5h1M595 638.5h1M600 638.5h1M605 638.5h1M607 638.5h1M612 638.5h2M615 638.5h1M617 638.5h5M627 638.5h1M632 638.5h4M637 638.5h2M640 638.5h3M644 638.5h1M646 638.5h1M652 638.5h1M654 638.5h1M669 638.5h1M692 638.5h1M319 639.5h2M325 639.5h1M327 639.5h1M329 639.5h1M334 639.5h1M338 639.5h1M340 639.5h1M346 639.5h3M353 639.5h1M355 639.5h2M358 639.5h2M362 639.5h1M364 639.5h1M367 639.5h3M377 639.5h4M382 639.5h3M386 639.5h1M388 639.5h4M393 639.5h1M396 639.5h1M398 639.5h1M400 639.5h3M404 639.5h2M407 639.5h1M410 639.5h1M412 639.5h2M417 639.5h1M419 639.5h1M424 639.5h5M431 639.5h1M433 639.5h1M435 639.5h2M439 639.5h5M446 639.5h2M451 639.5h1M453 639.5h2M457 639.5h2M460 639.5h3M464 639.5h1M466 639.5h1M468 639.5h2M471 639.5h2M474 639.5h1M477 639.5h5M484 639.5h2M487 639.5h2M490 639.5h2M494 639.5h1M496 639.5h1M498 639.5h1M500 639.5h1M503 639.5h1M507 639.5h1M509 639.5h3M513 639.5h1M515 639.5h2M518 639.5h1M521 639.5h1M523 639.5h23M548 639.5h4M554 639.5h2M557 639.5h2M560 639.5h4M567 639.5h2M575 639.5h1M579 639.5h1M582 639.5h2M586 639.5h2M590 639.5h1M592 639.5h4M605 639.5h1M607 639.5h1M612 639.5h1M615 639.5h2M618 639.5h1M620 639.5h3M624 639.5h2M627 639.5h1M629 639.5h3M633 639.5h2M636 639.5h1M641 639.5h2M644 639.5h1M646 639.5h1M652 639.5h1M654 639.5h1M664 639.5h2M678 639.5h1M692 639.5h1M704 639.5h1M301 640.5h1M319 640.5h1M323 640.5h1M327 640.5h1M329 640.5h1M337 640.5h2M340 640.5h1M345 640.5h4M350 640.5h1M354 640.5h6M364 640.5h2M369 640.5h1M377 640.5h6M384 640.5h1M386 640.5h1M390 640.5h1M392 640.5h3M396 640.5h3M400 640.5h3M404 640.5h2M412 640.5h2M417 640.5h1M419 640.5h1M423 640.5h6M431 640.5h2M434 640.5h1M436 640.5h6M443 640.5h5M451 640.5h2M454 640.5h3M458 640.5h1M460 640.5h3M464 640.5h1M467 640.5h2M471 640.5h2M474 640.5h2M477 640.5h6M485 640.5h1M489 640.5h1M491 640.5h2M494 640.5h5M500 640.5h1M503 640.5h6M510 640.5h1M512 640.5h5M518 640.5h1M522 640.5h1M524 640.5h1M526 640.5h16M543 640.5h2M546 640.5h7M554 640.5h15M573 640.5h1M575 640.5h1M578 640.5h3M582 640.5h1M584 640.5h3M589 640.5h1M593 640.5h1M601 640.5h1M603 640.5h1M605 640.5h1M607 640.5h1M612 640.5h1M615 640.5h2M618 640.5h1M620 640.5h1M622 640.5h1M624 640.5h2M629 640.5h1M633 640.5h1M636 640.5h1M646 640.5h1M654 640.5h1M658 640.5h1M665 640.5h1M678 640.5h1M683 640.5h1M692 640.5h1M709 640.5h1M319 641.5h2M323 641.5h1M326 641.5h2M329 641.5h1M337 641.5h1M339 641.5h1M341 641.5h1M345 641.5h1M349 641.5h1M352 641.5h8M361 641.5h6M369 641.5h1M375 641.5h4M381 641.5h1M384 641.5h3M390 641.5h1M392 641.5h8M402 641.5h1M405 641.5h1M409 641.5h1M411 641.5h1M413 641.5h2M417 641.5h2M423 641.5h5M430 641.5h1M434 641.5h1M436 641.5h1M438 641.5h1M441 641.5h6M451 641.5h2M454 641.5h1M456 641.5h3M460 641.5h1M462 641.5h1M464 641.5h1M466 641.5h1M468 641.5h2M472 641.5h4M478 641.5h1M480 641.5h1M482 641.5h1M484 641.5h1M488 641.5h1M491 641.5h2M494 641.5h2M498 641.5h1M502 641.5h1M506 641.5h1M508 641.5h1M510 641.5h1M513 641.5h4M518 641.5h1M520 641.5h10M531 641.5h8M540 641.5h2M543 641.5h3M547 641.5h2M550 641.5h17M571 641.5h3M576 641.5h2M579 641.5h2M583 641.5h1M585 641.5h1M588 641.5h1M590 641.5h1M594 641.5h1M596 641.5h2M600 641.5h1M605 641.5h2M615 641.5h2M622 641.5h1M625 641.5h2M631 641.5h1M633 641.5h1M635 641.5h1M642 641.5h1M644 641.5h1M646 641.5h1M654 641.5h1M657 641.5h2M665 641.5h1M672 641.5h1M678 641.5h1M683 641.5h1M311 642.5h1M314 642.5h1M320 642.5h1M323 642.5h1M326 642.5h2M330 642.5h1M335 642.5h1M338 642.5h1M340 642.5h2M345 642.5h1M348 642.5h1M350 642.5h1M352 642.5h1M354 642.5h1M356 642.5h1M358 642.5h2M361 642.5h3M365 642.5h2M372 642.5h1M376 642.5h3M386 642.5h1M390 642.5h3M395 642.5h3M399 642.5h1M402 642.5h4M408 642.5h2M411 642.5h1M413 642.5h2M418 642.5h1M420 642.5h1M423 642.5h4M428 642.5h1M432 642.5h1M434 642.5h3M439 642.5h3M443 642.5h1M446 642.5h1M448 642.5h2M452 642.5h1M454 642.5h1M456 642.5h2M459 642.5h3M463 642.5h2M466 642.5h1M469 642.5h1M473 642.5h7M482 642.5h6M489 642.5h6M498 642.5h7M506 642.5h1M508 642.5h2M513 642.5h3M517 642.5h2M520 642.5h2M523 642.5h4M528 642.5h2M531 642.5h1M533 642.5h1M535 642.5h2M538 642.5h2M541 642.5h3M545 642.5h1M547 642.5h1M550 642.5h3M554 642.5h1M556 642.5h6M564 642.5h3M568 642.5h3M572 642.5h1M575 642.5h1M577 642.5h1M579 642.5h1M582 642.5h4M591 642.5h1M594 642.5h3M598 642.5h1M606 642.5h2M609 642.5h1M616 642.5h1M623 642.5h1M626 642.5h1M633 642.5h1M635 642.5h1M637 642.5h1M642 642.5h1M646 642.5h1M654 642.5h2M658 642.5h1M664 642.5h2M672 642.5h1M674 642.5h1M678 642.5h1M683 642.5h1M689 642.5h1M311 643.5h1M320 643.5h1M331 643.5h2M335 643.5h1M338 643.5h1M340 643.5h2M346 643.5h1M348 643.5h1M350 643.5h2M354 643.5h3M359 643.5h2M363 643.5h1M365 643.5h3M372 643.5h2M375 643.5h2M378 643.5h1M380 643.5h3M387 643.5h1M389 643.5h2M392 643.5h1M395 643.5h3M399 643.5h1M402 643.5h13M416 643.5h1M418 643.5h4M424 643.5h2M428 643.5h2M432 643.5h1M434 643.5h8M444 643.5h1M446 643.5h4M451 643.5h4M457 643.5h3M461 643.5h4M466 643.5h1M473 643.5h5M479 643.5h1M482 643.5h6M490 643.5h2M493 643.5h2M498 643.5h1M500 643.5h1M502 643.5h4M510 643.5h1M512 643.5h1M514 643.5h4M521 643.5h1M523 643.5h15M541 643.5h5M547 643.5h2M550 643.5h8M559 643.5h1M561 643.5h1M563 643.5h1M565 643.5h1M569 643.5h1M572 643.5h2M575 643.5h1M579 643.5h4M584 643.5h1M586 643.5h1M590 643.5h2M596 643.5h3M602 643.5h1M604 643.5h1M606 643.5h3M614 643.5h5M620 643.5h1M622 643.5h2M626 643.5h3M631 643.5h1M634 643.5h1M637 643.5h1M642 643.5h1M653 643.5h3M665 643.5h1M667 643.5h1M672 643.5h1M674 643.5h1M678 643.5h1M722 643.5h1M311 644.5h1M315 644.5h1M320 644.5h1M331 644.5h2M340 644.5h1M345 644.5h2M348 644.5h4M353 644.5h3M359 644.5h1M361 644.5h3M365 644.5h3M373 644.5h3M378 644.5h1M380 644.5h3M387 644.5h1M389 644.5h2M392 644.5h1M394 644.5h1M396 644.5h2M399 644.5h1M402 644.5h1M404 644.5h2M407 644.5h2M410 644.5h1M412 644.5h4M417 644.5h8M428 644.5h4M434 644.5h6M442 644.5h2M445 644.5h4M451 644.5h4M457 644.5h2M460 644.5h4M465 644.5h2M472 644.5h8M481 644.5h6M489 644.5h5M495 644.5h1M498 644.5h1M500 644.5h2M503 644.5h1M505 644.5h1M507 644.5h3M511 644.5h2M514 644.5h6M521 644.5h1M525 644.5h13M539 644.5h3M543 644.5h1M545 644.5h1M547 644.5h4M552 644.5h4M558 644.5h1M561 644.5h1M566 644.5h4M571 644.5h4M577 644.5h4M582 644.5h1M584 644.5h1M586 644.5h3M592 644.5h1M594 644.5h2M598 644.5h2M602 644.5h1M606 644.5h2M609 644.5h1M615 644.5h1M617 644.5h2M622 644.5h4M636 644.5h1M639 644.5h1M641 644.5h1M648 644.5h1M650 644.5h2M654 644.5h2M662 644.5h1M667 644.5h1M674 644.5h1M678 644.5h1M722 644.5h1M295 645.5h1M315 645.5h1M326 645.5h3M331 645.5h1M340 645.5h1M344 645.5h2M348 645.5h1M350 645.5h1M353 645.5h1M355 645.5h2M359 645.5h1M361 645.5h3M366 645.5h3M371 645.5h1M373 645.5h1M375 645.5h2M378 645.5h1M380 645.5h2M385 645.5h1M387 645.5h1M389 645.5h1M392 645.5h1M396 645.5h2M399 645.5h2M403 645.5h3M407 645.5h1M409 645.5h9M420 645.5h4M426 645.5h1M428 645.5h1M430 645.5h11M444 645.5h1M446 645.5h3M450 645.5h4M455 645.5h1M457 645.5h1M459 645.5h5M465 645.5h3M471 645.5h1M473 645.5h3M477 645.5h4M483 645.5h4M489 645.5h1M491 645.5h2M495 645.5h3M501 645.5h1M503 645.5h3M507 645.5h3M511 645.5h2M514 645.5h1M516 645.5h3M520 645.5h2M523 645.5h1M525 645.5h9M535 645.5h6M542 645.5h1M544 645.5h1M546 645.5h15M563 645.5h9M573 645.5h3M578 645.5h1M581 645.5h1M583 645.5h2M587 645.5h2M591 645.5h1M594 645.5h2M598 645.5h2M602 645.5h1M607 645.5h1M609 645.5h1M615 645.5h1M618 645.5h2M622 645.5h2M628 645.5h1M631 645.5h1M633 645.5h1M636 645.5h1M639 645.5h1M641 645.5h1M648 645.5h1M652 645.5h1M654 645.5h2M662 645.5h1M665 645.5h1M667 645.5h1M673 645.5h1M678 645.5h2M682 645.5h1M722 645.5h1M299 646.5h1M326 646.5h3M337 646.5h1M340 646.5h1M344 646.5h2M348 646.5h1M350 646.5h3M355 646.5h1M359 646.5h1M361 646.5h3M366 646.5h6M373 646.5h5M380 646.5h2M383 646.5h3M387 646.5h1M389 646.5h1M395 646.5h4M403 646.5h2M406 646.5h3M410 646.5h4M416 646.5h2M420 646.5h4M425 646.5h3M429 646.5h1M431 646.5h3M435 646.5h1M438 646.5h2M444 646.5h1M446 646.5h4M451 646.5h4M457 646.5h4M462 646.5h2M465 646.5h3M471 646.5h2M474 646.5h2M477 646.5h2M480 646.5h2M484 646.5h4M489 646.5h1M491 646.5h2M496 646.5h2M500 646.5h2M503 646.5h1M506 646.5h3M510 646.5h2M513 646.5h2M516 646.5h1M518 646.5h1M520 646.5h1M523 646.5h1M525 646.5h2M528 646.5h1M530 646.5h8M539 646.5h3M544 646.5h2M547 646.5h3M551 646.5h6M560 646.5h4M565 646.5h6M572 646.5h1M574 646.5h1M577 646.5h1M579 646.5h1M581 646.5h2M584 646.5h1M586 646.5h4M591 646.5h1M593 646.5h2M598 646.5h2M601 646.5h2M609 646.5h1M615 646.5h1M618 646.5h3M623 646.5h1M625 646.5h1M627 646.5h1M633 646.5h1M638 646.5h1M641 646.5h1M644 646.5h1M648 646.5h1M654 646.5h1M658 646.5h2M662 646.5h1M665 646.5h1M673 646.5h2M678 646.5h1M682 646.5h2M696 646.5h1M306 647.5h1M317 647.5h1M326 647.5h1M329 647.5h1M341 647.5h1M344 647.5h2M347 647.5h1M349 647.5h1M351 647.5h2M355 647.5h1M359 647.5h1M361 647.5h3M368 647.5h2M371 647.5h1M373 647.5h4M380 647.5h2M383 647.5h3M387 647.5h1M389 647.5h1M395 647.5h3M403 647.5h2M406 647.5h3M410 647.5h12M423 647.5h1M426 647.5h3M431 647.5h1M433 647.5h3M438 647.5h2M441 647.5h1M444 647.5h6M453 647.5h2M457 647.5h3M462 647.5h2M465 647.5h5M474 647.5h1M478 647.5h1M482 647.5h6M489 647.5h1M491 647.5h1M495 647.5h3M499 647.5h5M507 647.5h2M511 647.5h1M513 647.5h1M517 647.5h2M523 647.5h6M530 647.5h3M534 647.5h2M537 647.5h2M540 647.5h3M544 647.5h2M548 647.5h6M555 647.5h3M560 647.5h1M562 647.5h1M564 647.5h4M569 647.5h2M572 647.5h1M574 647.5h4M579 647.5h2M582 647.5h1M587 647.5h1M589 647.5h1M591 647.5h2M594 647.5h2M598 647.5h2M601 647.5h2M607 647.5h1M618 647.5h1M620 647.5h1M625 647.5h1M627 647.5h1M629 647.5h1M631 647.5h3M635 647.5h1M640 647.5h3M644 647.5h1M647 647.5h2M651 647.5h1M654 647.5h3M658 647.5h1M664 647.5h3M670 647.5h1M674 647.5h1M678 647.5h1M682 647.5h1M696 647.5h1M719 647.5h1M306 648.5h1M314 648.5h1M325 648.5h1M329 648.5h2M338 648.5h1M340 648.5h1M342 648.5h1M344 648.5h1M347 648.5h1M349 648.5h1M351 648.5h5M359 648.5h2M362 648.5h1M365 648.5h1M368 648.5h4M373 648.5h2M376 648.5h1M378 648.5h4M383 648.5h3M387 648.5h1M389 648.5h1M393 648.5h5M399 648.5h2M403 648.5h2M406 648.5h2M411 648.5h3M416 648.5h1M418 648.5h1M420 648.5h1M422 648.5h2M426 648.5h4M432 648.5h1M434 648.5h2M437 648.5h3M441 648.5h1M443 648.5h8M452 648.5h1M454 648.5h2M457 648.5h3M462 648.5h1M464 648.5h1M467 648.5h3M471 648.5h1M474 648.5h1M477 648.5h4M483 648.5h2M486 648.5h2M489 648.5h1M491 648.5h2M494 648.5h5M500 648.5h4M505 648.5h3M509 648.5h1M511 648.5h9M523 648.5h2M526 648.5h1M528 648.5h15M545 648.5h15M561 648.5h2M564 648.5h2M568 648.5h5M574 648.5h1M577 648.5h1M580 648.5h2M584 648.5h2M587 648.5h1M589 648.5h1M591 648.5h2M594 648.5h2M606 648.5h2M613 648.5h2M617 648.5h1M621 648.5h1M623 648.5h1M629 648.5h3M633 648.5h1M644 648.5h1M647 648.5h2M654 648.5h1M656 648.5h1M661 648.5h1M665 648.5h1M669 648.5h2M678 648.5h1M696 648.5h1M311 649.5h1M325 649.5h2M329 649.5h2M338 649.5h1M340 649.5h1M342 649.5h3M347 649.5h1M349 649.5h1M351 649.5h1M354 649.5h2M358 649.5h3M362 649.5h2M366 649.5h1M368 649.5h4M374 649.5h1M377 649.5h2M380 649.5h1M383 649.5h1M386 649.5h2M389 649.5h1M391 649.5h1M394 649.5h4M399 649.5h6M406 649.5h7M415 649.5h2M418 649.5h1M420 649.5h1M422 649.5h1M424 649.5h3M428 649.5h2M432 649.5h1M434 649.5h2M437 649.5h2M440 649.5h1M443 649.5h6M452 649.5h4M457 649.5h3M462 649.5h5M468 649.5h1M472 649.5h3M476 649.5h3M480 649.5h1M482 649.5h7M491 649.5h2M494 649.5h1M496 649.5h1M498 649.5h4M504 649.5h6M511 649.5h1M513 649.5h1M515 649.5h6M522 649.5h2M526 649.5h1M528 649.5h5M536 649.5h4M542 649.5h1M545 649.5h2M548 649.5h4M553 649.5h1M555 649.5h1M557 649.5h1M559 649.5h3M563 649.5h5M569 649.5h2M573 649.5h2M576 649.5h1M579 649.5h1M581 649.5h2M588 649.5h1M590 649.5h1M592 649.5h1M594 649.5h1M603 649.5h1M606 649.5h2M613 649.5h2M617 649.5h7M625 649.5h1M630 649.5h3M634 649.5h1M636 649.5h1M638 649.5h1M640 649.5h2M648 649.5h1M654 649.5h1M656 649.5h1M658 649.5h1M665 649.5h2M670 649.5h1M675 649.5h2M690 649.5h1M707 649.5h1M311 650.5h1M318 650.5h1M325 650.5h2M329 650.5h1M331 650.5h1M342 650.5h3M348 650.5h1M351 650.5h1M353 650.5h1M355 650.5h1M360 650.5h4M365 650.5h5M373 650.5h2M376 650.5h1M378 650.5h3M383 650.5h3M387 650.5h1M389 650.5h1M391 650.5h1M393 650.5h10M407 650.5h1M409 650.5h4M416 650.5h3M422 650.5h4M428 650.5h2M431 650.5h2M435 650.5h8M444 650.5h2M447 650.5h2M453 650.5h1M455 650.5h2M458 650.5h6M465 650.5h2M468 650.5h1M472 650.5h1M474 650.5h1M476 650.5h3M480 650.5h1M482 650.5h2M485 650.5h2M489 650.5h1M491 650.5h2M496 650.5h2M499 650.5h4M505 650.5h1M509 650.5h2M518 650.5h3M523 650.5h2M526 650.5h6M533 650.5h3M537 650.5h5M545 650.5h7M554 650.5h5M561 650.5h1M564 650.5h2M570 650.5h3M574 650.5h2M579 650.5h2M584 650.5h1M586 650.5h1M588 650.5h1M591 650.5h1M594 650.5h1M597 650.5h1M606 650.5h2M610 650.5h1M612 650.5h3M617 650.5h5M624 650.5h2M631 650.5h4M636 650.5h1M640 650.5h2M646 650.5h2M656 650.5h1M658 650.5h1M664 650.5h3M670 650.5h2M676 650.5h1M682 650.5h1M687 650.5h1M705 650.5h1M707 650.5h1M325 651.5h1M329 651.5h1M337 651.5h2M341 651.5h3M348 651.5h4M353 651.5h1M355 651.5h1M360 651.5h2M363 651.5h1M365 651.5h1M367 651.5h4M372 651.5h1M374 651.5h1M376 651.5h1M378 651.5h3M382 651.5h2M385 651.5h2M390 651.5h2M393 651.5h4M398 651.5h1M400 651.5h3M405 651.5h1M407 651.5h2M410 651.5h4M415 651.5h1M417 651.5h1M419 651.5h3M423 651.5h4M428 651.5h1M430 651.5h1M432 651.5h1M435 651.5h2M438 651.5h3M443 651.5h1M445 651.5h3M449 651.5h1M452 651.5h5M459 651.5h5M465 651.5h3M469 651.5h1M472 651.5h1M474 651.5h1M476 651.5h3M480 651.5h1M483 651.5h5M490 651.5h1M492 651.5h1M500 651.5h2M503 651.5h1M506 651.5h1M508 651.5h1M510 651.5h2M514 651.5h2M517 651.5h4M522 651.5h3M526 651.5h22M549 651.5h3M553 651.5h2M559 651.5h6M568 651.5h1M572 651.5h1M575 651.5h1M579 651.5h2M583 651.5h1M588 651.5h3M592 651.5h1M594 651.5h1M597 651.5h1M600 651.5h2M606 651.5h2M610 651.5h1M613 651.5h1M616 651.5h2M621 651.5h1M624 651.5h2M636 651.5h2M644 651.5h1M646 651.5h2M652 651.5h1M656 651.5h1M665 651.5h1M670 651.5h1M682 651.5h1M685 651.5h1M687 651.5h1M689 651.5h1M691 651.5h1M707 651.5h1M307 652.5h2M322 652.5h1M325 652.5h1M329 652.5h1M331 652.5h1M337 652.5h3M341 652.5h1M343 652.5h1M353 652.5h1M355 652.5h2M359 652.5h1M361 652.5h1M363 652.5h1M367 652.5h1M370 652.5h1M374 652.5h1M378 652.5h5M385 652.5h3M390 652.5h4M395 652.5h1M397 652.5h2M400 652.5h1M402 652.5h1M405 652.5h1M408 652.5h1M411 652.5h5M417 652.5h3M421 652.5h1M425 652.5h4M430 652.5h1M432 652.5h2M435 652.5h2M438 652.5h3M444 652.5h3M449 652.5h1M451 652.5h2M454 652.5h1M459 652.5h5M465 652.5h1M470 652.5h2M473 652.5h3M477 652.5h1M480 652.5h2M484 652.5h5M491 652.5h2M495 652.5h2M499 652.5h1M502 652.5h2M506 652.5h6M514 652.5h1M516 652.5h1M518 652.5h1M520 652.5h5M526 652.5h3M530 652.5h1M533 652.5h5M539 652.5h2M542 652.5h4M549 652.5h1M551 652.5h6M558 652.5h2M562 652.5h5M568 652.5h3M576 652.5h1M578 652.5h4M583 652.5h1M586 652.5h1M590 652.5h3M595 652.5h2M598 652.5h1M600 652.5h3M606 652.5h1M609 652.5h2M616 652.5h2M620 652.5h1M622 652.5h1M625 652.5h1M630 652.5h2M633 652.5h1M635 652.5h3M642 652.5h1M644 652.5h1M652 652.5h1M664 652.5h1M670 652.5h1M682 652.5h1M689 652.5h1M313 653.5h1M324 653.5h2M328 653.5h1M335 653.5h1M351 653.5h1M356 653.5h1M358 653.5h1M361 653.5h1M363 653.5h1M365 653.5h3M370 653.5h2M373 653.5h2M376 653.5h6M385 653.5h1M390 653.5h1M393 653.5h2M396 653.5h2M399 653.5h4M406 653.5h2M409 653.5h1M411 653.5h2M414 653.5h2M417 653.5h3M421 653.5h10M432 653.5h1M434 653.5h4M439 653.5h2M442 653.5h1M445 653.5h3M453 653.5h1M455 653.5h1M459 653.5h1M463 653.5h1M465 653.5h2M469 653.5h1M471 653.5h1M473 653.5h3M477 653.5h3M481 653.5h8M493 653.5h1M495 653.5h2M501 653.5h1M504 653.5h1M506 653.5h1M508 653.5h3M514 653.5h2M517 653.5h1M519 653.5h2M522 653.5h3M530 653.5h5M536 653.5h9M546 653.5h2M549 653.5h11M561 653.5h2M564 653.5h1M566 653.5h2M570 653.5h2M577 653.5h4M584 653.5h2M590 653.5h3M596 653.5h2M599 653.5h3M605 653.5h3M609 653.5h1M615 653.5h1M618 653.5h1M621 653.5h1M626 653.5h1M629 653.5h1M631 653.5h1M633 653.5h1M635 653.5h1M637 653.5h1M640 653.5h1M642 653.5h1M644 653.5h1M647 653.5h1M650 653.5h1M652 653.5h1M655 653.5h1M657 653.5h1M659 653.5h1M664 653.5h1M666 653.5h1M668 653.5h1M670 653.5h1M674 653.5h1M676 653.5h1M682 653.5h1M299 654.5h1M324 654.5h2M328 654.5h1M338 654.5h1M347 654.5h1M351 654.5h1M354 654.5h1M356 654.5h1M358 654.5h1M363 654.5h4M368 654.5h2M371 654.5h1M373 654.5h1M376 654.5h1M380 654.5h2M388 654.5h1M390 654.5h1M393 654.5h2M396 654.5h2M399 654.5h6M407 654.5h4M412 654.5h2M415 654.5h1M417 654.5h2M421 654.5h3M425 654.5h4M431 654.5h1M435 654.5h3M439 654.5h2M442 654.5h2M445 654.5h1M447 654.5h3M451 654.5h1M453 654.5h5M460 654.5h6M467 654.5h1M470 654.5h1M473 654.5h1M475 654.5h2M478 654.5h1M482 654.5h3M486 654.5h6M493 654.5h1M498 654.5h3M508 654.5h1M512 654.5h5M520 654.5h10M531 654.5h9M541 654.5h7M550 654.5h1M553 654.5h4M558 654.5h1M562 654.5h3M566 654.5h3M570 654.5h4M576 654.5h5M582 654.5h4M588 654.5h1M591 654.5h3M597 654.5h1M599 654.5h1M601 654.5h1M603 654.5h1M607 654.5h1M609 654.5h1M618 654.5h1M626 654.5h1M628 654.5h4M635 654.5h1M640 654.5h1M644 654.5h1M647 654.5h1M652 654.5h1M655 654.5h1M664 654.5h1M666 654.5h1M674 654.5h1M682 654.5h1M711 654.5h1M717 654.5h1M315 655.5h1M325 655.5h1M327 655.5h1M335 655.5h1M338 655.5h1M341 655.5h2M346 655.5h1M348 655.5h1M350 655.5h1M352 655.5h1M354 655.5h4M361 655.5h1M363 655.5h2M366 655.5h1M368 655.5h2M371 655.5h1M373 655.5h3M380 655.5h2M387 655.5h4M392 655.5h3M396 655.5h1M399 655.5h4M404 655.5h3M409 655.5h2M412 655.5h1M415 655.5h3M420 655.5h1M422 655.5h2M425 655.5h3M429 655.5h4M434 655.5h12M447 655.5h4M456 655.5h2M460 655.5h1M462 655.5h4M467 655.5h1M469 655.5h1M472 655.5h5M482 655.5h1M484 655.5h1M486 655.5h1M489 655.5h3M493 655.5h1M498 655.5h3M502 655.5h1M505 655.5h1M507 655.5h2M512 655.5h5M519 655.5h6M526 655.5h1M528 655.5h2M531 655.5h5M537 655.5h1M539 655.5h1M541 655.5h16M558 655.5h5M564 655.5h3M568 655.5h1M570 655.5h5M577 655.5h3M583 655.5h2M586 655.5h1M588 655.5h1M590 655.5h3M595 655.5h3M601 655.5h1M607 655.5h1M610 655.5h1M615 655.5h2M618 655.5h1M623 655.5h1M626 655.5h1M629 655.5h2M633 655.5h1M640 655.5h1M642 655.5h1M647 655.5h1M654 655.5h1M664 655.5h2M667 655.5h1M672 655.5h3M677 655.5h1M682 655.5h1M711 655.5h1M720 655.5h1M307 656.5h1M317 656.5h1M327 656.5h2M335 656.5h1M338 656.5h1M342 656.5h1M345 656.5h2M349 656.5h1M351 656.5h2M354 656.5h4M359 656.5h1M363 656.5h4M368 656.5h1M373 656.5h4M379 656.5h2M382 656.5h1M387 656.5h2M392 656.5h3M396 656.5h1M398 656.5h1M400 656.5h3M404 656.5h3M409 656.5h2M412 656.5h2M415 656.5h3M419 656.5h7M427 656.5h1M429 656.5h4M435 656.5h4M443 656.5h5M450 656.5h2M454 656.5h1M456 656.5h1M460 656.5h1M463 656.5h2M468 656.5h3M472 656.5h2M475 656.5h3M479 656.5h1M481 656.5h5M489 656.5h2M492 656.5h1M494 656.5h2M498 656.5h2M501 656.5h2M507 656.5h1M509 656.5h1M511 656.5h3M516 656.5h2M519 656.5h1M523 656.5h1M526 656.5h1M528 656.5h11M540 656.5h5M546 656.5h1M548 656.5h7M556 656.5h5M563 656.5h2M567 656.5h7M575 656.5h1M579 656.5h2M582 656.5h3M586 656.5h1M589 656.5h4M595 656.5h1M602 656.5h1M606 656.5h1M610 656.5h1M612 656.5h1M616 656.5h1M618 656.5h1M622 656.5h3M630 656.5h1M638 656.5h2M641 656.5h1M647 656.5h1M657 656.5h1M667 656.5h1M670 656.5h1M672 656.5h1M674 656.5h1M677 656.5h1M711 656.5h1M308 657.5h1M317 657.5h1M331 657.5h1M335 657.5h1M337 657.5h1M340 657.5h2M345 657.5h2M348 657.5h3M352 657.5h2M355 657.5h1M359 657.5h1M362 657.5h2M366 657.5h1M368 657.5h1M370 657.5h2M373 657.5h4M378 657.5h3M382 657.5h1M388 657.5h1M392 657.5h2M396 657.5h1M398 657.5h3M402 657.5h4M409 657.5h3M415 657.5h3M419 657.5h2M423 657.5h3M430 657.5h1M433 657.5h2M437 657.5h3M442 657.5h3M447 657.5h7M456 657.5h1M458 657.5h3M462 657.5h3M467 657.5h2M470 657.5h1M472 657.5h1M476 657.5h4M481 657.5h6M488 657.5h1M490 657.5h3M494 657.5h4M501 657.5h1M503 657.5h1M506 657.5h1M509 657.5h1M512 657.5h3M516 657.5h2M519 657.5h1M521 657.5h1M523 657.5h3M527 657.5h2M530 657.5h6M537 657.5h5M543 657.5h5M549 657.5h5M557 657.5h3M561 657.5h3M565 657.5h2M569 657.5h8M579 657.5h1M582 657.5h1M584 657.5h1M586 657.5h1M588 657.5h5M594 657.5h2M599 657.5h1M602 657.5h1M604 657.5h1M606 657.5h1M612 657.5h1M617 657.5h2M621 657.5h4M630 657.5h1M634 657.5h2M638 657.5h2M647 657.5h1M653 657.5h2M656 657.5h1M667 657.5h1M670 657.5h1M672 657.5h1M674 657.5h1M683 657.5h1M695 657.5h1M707 657.5h1M308 658.5h1M313 658.5h1M317 658.5h1M320 658.5h1M324 658.5h1M331 658.5h1M335 658.5h1M340 658.5h1M346 658.5h1M348 658.5h1M350 658.5h1M352 658.5h2M358 658.5h2M362 658.5h1M365 658.5h2M370 658.5h1M373 658.5h1M375 658.5h2M379 658.5h3M383 658.5h1M388 658.5h5M396 658.5h3M403 658.5h3M407 658.5h1M411 658.5h2M415 658.5h1M417 658.5h3M422 658.5h1M424 658.5h2M427 658.5h2M430 658.5h1M433 658.5h6M442 658.5h4M447 658.5h2M450 658.5h11M462 658.5h1M464 658.5h1M467 658.5h2M470 658.5h1M472 658.5h5M479 658.5h10M490 658.5h3M494 658.5h2M501 658.5h1M505 658.5h1M507 658.5h3M512 658.5h6M519 658.5h5M527 658.5h1M529 658.5h11M541 658.5h2M545 658.5h6M552 658.5h3M556 658.5h1M559 658.5h2M562 658.5h6M570 658.5h1M573 658.5h1M575 658.5h1M579 658.5h2M582 658.5h1M588 658.5h1M591 658.5h1M595 658.5h3M599 658.5h1M604 658.5h1M607 658.5h3M618 658.5h1M621 658.5h2M630 658.5h1M634 658.5h1M637 658.5h1M640 658.5h1M643 658.5h1M648 658.5h3M653 658.5h1M657 658.5h1M660 658.5h1M663 658.5h1M668 658.5h1M670 658.5h1M675 658.5h1M682 658.5h2M695 658.5h1M308 659.5h1M313 659.5h1M319 659.5h2M324 659.5h1M329 659.5h1M331 659.5h1M339 659.5h1M343 659.5h1M346 659.5h1M348 659.5h1M350 659.5h1M353 659.5h1M357 659.5h7M365 659.5h3M369 659.5h2M375 659.5h2M379 659.5h1M383 659.5h1M386 659.5h1M389 659.5h2M392 659.5h1M394 659.5h1M397 659.5h1M400 659.5h1M405 659.5h1M411 659.5h2M415 659.5h1M417 659.5h1M419 659.5h1M421 659.5h6M428 659.5h1M433 659.5h1M442 659.5h2M445 659.5h2M448 659.5h4M453 659.5h1M455 659.5h2M459 659.5h1M462 659.5h4M468 659.5h1M470 659.5h4M475 659.5h2M478 659.5h1M480 659.5h6M488 659.5h1M490 659.5h2M493 659.5h1M496 659.5h1M498 659.5h4M503 659.5h1M507 659.5h3M513 659.5h4M518 659.5h3M522 659.5h3M527 659.5h5M533 659.5h6M540 659.5h9M550 659.5h5M556 659.5h8M565 659.5h2M568 659.5h4M575 659.5h1M577 659.5h6M585 659.5h2M588 659.5h1M590 659.5h2M594 659.5h1M596 659.5h1M599 659.5h1M606 659.5h1M608 659.5h1M611 659.5h1M614 659.5h1M616 659.5h1M618 659.5h1M622 659.5h1M624 659.5h1M629 659.5h4M637 659.5h3M642 659.5h2M648 659.5h2M653 659.5h1M657 659.5h1M659 659.5h2M663 659.5h1M668 659.5h4M675 659.5h2M689 659.5h1M695 659.5h1M313 660.5h2M319 660.5h2M324 660.5h1M329 660.5h1M331 660.5h1M339 660.5h1M346 660.5h1M350 660.5h2M353 660.5h1M358 660.5h1M360 660.5h1M362 660.5h5M370 660.5h1M373 660.5h1M375 660.5h3M379 660.5h5M385 660.5h2M389 660.5h2M392 660.5h4M397 660.5h1M399 660.5h1M401 660.5h1M406 660.5h2M409 660.5h1M411 660.5h5M417 660.5h4M422 660.5h1M424 660.5h1M426 660.5h1M428 660.5h2M431 660.5h3M435 660.5h1M439 660.5h3M443 660.5h1M445 660.5h2M448 660.5h4M453 660.5h4M459 660.5h1M461 660.5h3M468 660.5h1M470 660.5h4M475 660.5h1M478 660.5h1M480 660.5h2M483 660.5h3M487 660.5h1M489 660.5h3M493 660.5h1M496 660.5h1M498 660.5h2M501 660.5h1M503 660.5h1M508 660.5h1M510 660.5h1M512 660.5h1M514 660.5h1M516 660.5h1M520 660.5h2M523 660.5h1M526 660.5h2M529 660.5h18M548 660.5h2M551 660.5h4M556 660.5h1M558 660.5h5M565 660.5h2M571 660.5h4M577 660.5h1M579 660.5h4M587 660.5h1M590 660.5h1M595 660.5h1M599 660.5h1M605 660.5h4M611 660.5h1M614 660.5h1M616 660.5h1M618 660.5h2M622 660.5h1M630 660.5h3M634 660.5h1M637 660.5h1M639 660.5h2M643 660.5h1M647 660.5h1M653 660.5h2M659 660.5h2M663 660.5h2M668 660.5h1M670 660.5h1M673 660.5h1M675 660.5h1M680 660.5h1M685 660.5h1M699 660.5h1M313 661.5h1M319 661.5h1M322 661.5h1M325 661.5h3M329 661.5h1M331 661.5h2M339 661.5h1M342 661.5h2M346 661.5h1M350 661.5h2M353 661.5h1M356 661.5h4M364 661.5h2M367 661.5h1M370 661.5h1M373 661.5h5M379 661.5h1M381 661.5h3M385 661.5h2M390 661.5h1M392 661.5h4M397 661.5h1M399 661.5h1M401 661.5h1M403 661.5h2M406 661.5h2M409 661.5h1M411 661.5h1M413 661.5h3M417 661.5h2M420 661.5h1M422 661.5h1M426 661.5h1M428 661.5h2M432 661.5h1M440 661.5h1M443 661.5h1M446 661.5h3M450 661.5h1M452 661.5h2M459 661.5h1M461 661.5h4M468 661.5h1M471 661.5h2M474 661.5h2M478 661.5h5M484 661.5h2M487 661.5h2M491 661.5h2M494 661.5h3M499 661.5h1M501 661.5h2M504 661.5h1M508 661.5h1M511 661.5h1M517 661.5h5M525 661.5h2M528 661.5h3M532 661.5h11M544 661.5h9M554 661.5h2M558 661.5h2M561 661.5h4M566 661.5h1M568 661.5h2M571 661.5h3M576 661.5h1M578 661.5h2M581 661.5h1M583 661.5h1M585 661.5h1M593 661.5h3M599 661.5h2M607 661.5h3M616 661.5h4M621 661.5h1M627 661.5h2M630 661.5h2M634 661.5h1M637 661.5h4M642 661.5h1M646 661.5h1M654 661.5h1M658 661.5h2M663 661.5h2M668 661.5h1M670 661.5h1M673 661.5h1M706 661.5h1M306 662.5h1M319 662.5h1M326 662.5h2M329 662.5h1M339 662.5h2M342 662.5h2M345 662.5h1M350 662.5h2M353 662.5h1M357 662.5h1M359 662.5h1M362 662.5h1M368 662.5h1M370 662.5h1M373 662.5h1M375 662.5h9M385 662.5h1M387 662.5h1M390 662.5h1M392 662.5h2M397 662.5h2M401 662.5h3M406 662.5h2M409 662.5h1M411 662.5h1M414 662.5h1M418 662.5h3M424 662.5h1M428 662.5h2M433 662.5h1M436 662.5h1M439 662.5h2M444 662.5h1M447 662.5h2M450 662.5h4M455 662.5h1M459 662.5h3M463 662.5h2M468 662.5h7M476 662.5h2M481 662.5h3M487 662.5h1M490 662.5h3M494 662.5h3M499 662.5h1M509 662.5h1M515 662.5h5M521 662.5h1M523 662.5h1M525 662.5h14M542 662.5h2M545 662.5h2M549 662.5h3M553 662.5h5M559 662.5h1M561 662.5h1M563 662.5h5M569 662.5h1M572 662.5h3M576 662.5h1M578 662.5h2M581 662.5h1M583 662.5h6M590 662.5h2M594 662.5h2M599 662.5h1M607 662.5h1M612 662.5h1M616 662.5h1M618 662.5h2M627 662.5h1M639 662.5h1M641 662.5h2M644 662.5h3M648 662.5h1M664 662.5h1M671 662.5h1M680 662.5h1M704 662.5h1M706 662.5h1M718 662.5h1" stroke="#408070" stroke-width="1"/><path d="M431 616.5h1M543 616.5h1M552 616.5h1M556 616.5h1M562 616.5h1M564 616.5h4M595 616.5h1M687 616.5h1M320 617.5h1M363 617.5h1M431 617.5h1M464 617.5h1M515 617.5h1M537 617.5h1M541 617.5h4M547 617.5h1M550 617.5h1M555 617.5h2M558 617.5h2M565 617.5h1M583 617.5h1M636 617.5h2M643 617.5h1M674 617.5h1M336 618.5h1M399 618.5h1M515 618.5h1M522 618.5h1M531 618.5h1M539 618.5h2M545 618.5h1M548 618.5h2M563 618.5h1M565 618.5h1M568 618.5h1M578 618.5h1M700 618.5h1M452 619.5h1M499 619.5h1M503 619.5h1M508 619.5h1M524 619.5h1M528 619.5h1M541 619.5h1M551 619.5h1M560 619.5h1M565 619.5h1M571 619.5h1M579 619.5h1M606 619.5h1M616 619.5h1M452 620.5h1M494 620.5h1M514 620.5h1M539 620.5h1M542 620.5h1M545 620.5h2M551 620.5h1M556 620.5h1M559 620.5h2M576 620.5h1M578 620.5h1M698 620.5h1M371 621.5h1M403 621.5h1M408 621.5h1M495 621.5h1M497 621.5h1M503 621.5h1M509 621.5h2M528 621.5h1M545 621.5h3M560 621.5h1M566 621.5h2M573 621.5h1M576 621.5h1M582 621.5h1M610 621.5h1M684 621.5h1M317 622.5h1M402 622.5h1M520 622.5h1M528 622.5h1M530 622.5h1M542 622.5h2M552 622.5h1M554 622.5h1M556 622.5h1M558 622.5h1M567 622.5h1M570 622.5h1M600 622.5h1M660 622.5h1M317 623.5h1M409 623.5h1M458 623.5h1M503 623.5h1M516 623.5h1M529 623.5h1M534 623.5h2M539 623.5h2M549 623.5h1M553 623.5h2M563 623.5h1M570 623.5h1M588 623.5h1M417 624.5h1M453 624.5h1M498 624.5h1M500 624.5h1M525 624.5h1M528 624.5h1M539 624.5h1M543 624.5h1M547 624.5h1M564 624.5h1M566 624.5h1M570 624.5h1M575 624.5h1M578 624.5h1M366 625.5h1M522 625.5h1M540 625.5h1M544 625.5h1M559 625.5h2M563 625.5h1M566 625.5h1M575 625.5h1M579 625.5h1M600 625.5h1M619 625.5h1M317 626.5h1M495 626.5h1M510 626.5h1M540 626.5h2M545 626.5h2M552 626.5h2M556 626.5h1M558 626.5h1M561 626.5h2M565 626.5h3M569 626.5h1M571 626.5h1M589 626.5h1M310 627.5h1M496 627.5h1M520 627.5h1M530 627.5h1M548 627.5h1M558 627.5h1M562 627.5h1M566 627.5h2M570 627.5h2M573 627.5h2M577 627.5h1M632 627.5h1M341 628.5h1M375 628.5h1M472 628.5h1M504 628.5h1M536 628.5h1M548 628.5h1M550 628.5h1M555 628.5h1M559 628.5h1M562 628.5h1M568 628.5h1M576 628.5h2M579 628.5h1M588 628.5h1M387 629.5h2M390 629.5h1M541 629.5h1M547 629.5h1M553 629.5h1M558 629.5h1M561 629.5h1M563 629.5h2M566 629.5h1M568 629.5h1M574 629.5h2M587 629.5h1M599 629.5h1M710 629.5h1M377 630.5h1M420 630.5h1M454 630.5h1M501 630.5h1M508 630.5h1M532 630.5h1M534 630.5h1M538 630.5h1M548 630.5h1M557 630.5h1M560 630.5h1M564 630.5h1M573 630.5h1M575 630.5h1M583 630.5h1M595 630.5h1M607 630.5h1M616 630.5h1M411 631.5h1M441 631.5h1M508 631.5h1M518 631.5h1M520 631.5h1M522 631.5h1M539 631.5h2M544 631.5h1M546 631.5h1M548 631.5h1M554 631.5h1M556 631.5h1M561 631.5h1M563 631.5h1M565 631.5h1M569 631.5h2M572 631.5h1M589 631.5h1M606 631.5h1M631 631.5h1M316 632.5h1M358 632.5h1M422 632.5h1M523 632.5h1M534 632.5h1M536 632.5h1M543 632.5h1M548 632.5h1M551 632.5h2M557 632.5h1M561 632.5h2M566 632.5h1M570 632.5h1M573 632.5h1M575 632.5h1M585 632.5h1M597 632.5h1M625 632.5h1M671 632.5h1M342 633.5h1M446 633.5h1M456 633.5h1M487 633.5h1M495 633.5h1M500 633.5h2M507 633.5h1M526 633.5h1M538 633.5h1M546 633.5h1M548 633.5h1M567 633.5h3M621 633.5h1M342 634.5h1M385 634.5h1M453 634.5h1M512 634.5h1M523 634.5h1M540 634.5h1M551 634.5h1M555 634.5h1M559 634.5h1M565 634.5h1M568 634.5h1M574 634.5h1M589 634.5h1M600 634.5h1M651 634.5h1M689 634.5h1M319 635.5h1M391 635.5h1M455 635.5h1M476 635.5h1M507 635.5h1M515 635.5h1M517 635.5h1M535 635.5h1M538 635.5h2M541 635.5h1M545 635.5h1M548 635.5h1M553 635.5h1M557 635.5h1M569 635.5h1M572 635.5h1M574 635.5h1M600 635.5h1M330 636.5h1M382 636.5h1M499 636.5h1M511 636.5h1M530 636.5h1M541 636.5h2M544 636.5h1M546 636.5h1M551 636.5h2M559 636.5h2M570 636.5h2M573 636.5h2M339 637.5h1M352 637.5h1M395 637.5h1M497 637.5h1M517 637.5h1M528 637.5h2M541 637.5h2M551 637.5h1M554 637.5h1M558 637.5h1M560 637.5h1M563 637.5h1M569 637.5h1M574 637.5h1M578 637.5h1M585 637.5h1M624 637.5h1M654 637.5h1M416 638.5h1M466 638.5h1M522 638.5h1M525 638.5h1M538 638.5h1M540 638.5h1M543 638.5h1M545 638.5h1M550 638.5h1M552 638.5h1M556 638.5h1M571 638.5h2M594 638.5h1M666 638.5h1M351 639.5h1M392 639.5h1M470 639.5h1M499 639.5h1M522 639.5h1M546 639.5h2M552 639.5h2M556 639.5h1M564 639.5h1M566 639.5h1M570 639.5h2M573 639.5h1M576 639.5h2M600 639.5h1M320 640.5h1M362 640.5h1M367 640.5h1M459 640.5h1M521 640.5h1M523 640.5h1M542 640.5h1M545 640.5h1M553 640.5h1M570 640.5h1M576 640.5h2M594 640.5h2M600 640.5h1M689 640.5h1M301 641.5h1M350 641.5h1M471 641.5h1M497 641.5h1M500 641.5h1M503 641.5h1M530 641.5h1M539 641.5h1M542 641.5h1M546 641.5h1M549 641.5h1M568 641.5h1M570 641.5h1M689 641.5h1M406 642.5h1M532 642.5h1M537 642.5h1M540 642.5h1M544 642.5h1M546 642.5h1M548 642.5h2M553 642.5h1M555 642.5h1M562 642.5h2M571 642.5h1M573 642.5h2M576 642.5h1M597 642.5h1M614 642.5h2M631 642.5h1M347 643.5h1M507 643.5h1M511 643.5h1M513 643.5h1M538 643.5h3M546 643.5h1M549 643.5h1M558 643.5h1M560 643.5h1M564 643.5h1M567 643.5h2M574 643.5h1M577 643.5h1M585 643.5h1M587 643.5h1M599 643.5h1M416 644.5h1M440 644.5h1M459 644.5h1M502 644.5h1M504 644.5h1M510 644.5h1M522 644.5h2M538 644.5h1M542 644.5h1M544 644.5h1M546 644.5h1M551 644.5h1M556 644.5h2M559 644.5h2M562 644.5h4M570 644.5h1M575 644.5h2M583 644.5h1M597 644.5h1M608 644.5h1M458 645.5h1M502 645.5h1M519 645.5h1M541 645.5h1M543 645.5h1M545 645.5h1M561 645.5h2M572 645.5h1M582 645.5h1M625 645.5h1M658 645.5h1M674 645.5h1M685 645.5h1M349 646.5h1M392 646.5h1M415 646.5h1M517 646.5h1M519 646.5h1M538 646.5h1M542 646.5h2M546 646.5h1M550 646.5h1M557 646.5h3M575 646.5h2M580 646.5h1M583 646.5h1M719 646.5h1M353 647.5h1M512 647.5h1M514 647.5h1M536 647.5h1M539 647.5h1M543 647.5h1M546 647.5h2M554 647.5h1M558 647.5h2M561 647.5h1M563 647.5h1M568 647.5h1M571 647.5h1M573 647.5h1M621 647.5h1M326 648.5h1M414 648.5h1M482 648.5h1M543 648.5h2M560 648.5h1M563 648.5h1M566 648.5h1M573 648.5h1M576 648.5h1M620 648.5h1M632 648.5h1M423 649.5h1M502 649.5h2M533 649.5h3M540 649.5h2M543 649.5h2M547 649.5h1M552 649.5h1M554 649.5h1M556 649.5h1M558 649.5h1M562 649.5h1M568 649.5h1M577 649.5h2M585 649.5h2M591 649.5h1M651 649.5h1M667 649.5h1M347 650.5h1M415 650.5h1M503 650.5h1M515 650.5h1M532 650.5h1M536 650.5h1M542 650.5h3M552 650.5h2M559 650.5h2M562 650.5h2M567 650.5h3M573 650.5h1M578 650.5h1M582 650.5h1M589 650.5h2M630 650.5h1M685 650.5h1M406 651.5h1M502 651.5h1M548 651.5h1M552 651.5h1M555 651.5h4M565 651.5h1M569 651.5h1M573 651.5h1M578 651.5h1M584 651.5h1M598 651.5h1M620 651.5h1M664 651.5h1M705 651.5h1M399 652.5h1M407 652.5h1M423 652.5h1M453 652.5h1M500 652.5h1M504 652.5h1M531 652.5h2M538 652.5h1M541 652.5h1M546 652.5h3M550 652.5h1M557 652.5h1M560 652.5h2M567 652.5h1M584 652.5h1M597 652.5h1M624 652.5h1M706 652.5h1M329 653.5h1M383 653.5h1M398 653.5h1M451 653.5h1M499 653.5h1M503 653.5h1M511 653.5h1M513 653.5h1M525 653.5h1M535 653.5h1M545 653.5h1M548 653.5h1M560 653.5h1M563 653.5h1M565 653.5h1M568 653.5h1M575 653.5h2M588 653.5h1M595 653.5h1M617 653.5h1M348 654.5h1M469 654.5h1M519 654.5h1M540 654.5h1M548 654.5h2M551 654.5h2M557 654.5h1M559 654.5h3M565 654.5h1M574 654.5h2M590 654.5h1M598 654.5h1M617 654.5h1M667 654.5h1M382 655.5h1M495 655.5h1M511 655.5h1M536 655.5h1M538 655.5h1M540 655.5h1M557 655.5h1M563 655.5h1M567 655.5h1M575 655.5h1M593 655.5h1M606 655.5h1M717 655.5h1M315 656.5h1M496 656.5h1M503 656.5h1M505 656.5h1M510 656.5h1M521 656.5h1M524 656.5h1M527 656.5h1M539 656.5h1M545 656.5h1M547 656.5h1M555 656.5h1M561 656.5h1M565 656.5h2M574 656.5h1M577 656.5h2M343 657.5h1M454 657.5h1M507 657.5h1M529 657.5h1M536 657.5h1M542 657.5h1M548 657.5h1M554 657.5h3M560 657.5h1M564 657.5h1M567 657.5h2M578 657.5h1M580 657.5h1M596 657.5h1M610 657.5h1M636 657.5h1M640 657.5h1M643 657.5h1M500 658.5h1M528 658.5h1M540 658.5h1M543 658.5h2M551 658.5h1M555 658.5h1M557 658.5h2M571 658.5h2M576 658.5h1M584 658.5h1M586 658.5h1M707 658.5h1M340 659.5h1M391 659.5h1M393 659.5h1M539 659.5h1M549 659.5h1M555 659.5h1M567 659.5h1M572 659.5h3M576 659.5h1M584 659.5h1M595 659.5h1M605 659.5h1M607 659.5h1M627 659.5h1M685 659.5h1M374 660.5h1M495 660.5h1M547 660.5h1M550 660.5h1M555 660.5h1M557 660.5h1M563 660.5h2M567 660.5h3M575 660.5h1M578 660.5h1M585 660.5h1M600 660.5h1M676 660.5h1M695 660.5h1M354 661.5h1M516 661.5h1M522 661.5h1M527 661.5h1M543 661.5h1M553 661.5h1M556 661.5h2M560 661.5h1M565 661.5h1M567 661.5h1M574 661.5h1M586 661.5h1M610 661.5h1M680 661.5h1M367 662.5h1M417 662.5h1M504 662.5h1M511 662.5h1M520 662.5h1M539 662.5h3M544 662.5h1M547 662.5h2M552 662.5h1M558 662.5h1M560 662.5h1M562 662.5h1M570 662.5h1M577 662.5h1" stroke="#008000" stroke-width="1"/><path d="M444.5 616V663" stroke="#207a40" stroke-width="1"/><path d="M500.5 616V663" stroke="#10c020" stroke-width="1"/><path d="M511.5 616V663" stroke="#e07030" stroke-width="1"/><path d="M525.5 616V663" stroke="#10c020" stroke-width="1"/><path d="M534.5 616V663" stroke="#c0f020" stroke-width="1"/><path d="M542.5 616V663" stroke="#10d020" stroke-width="1"/><path d="M544.5 616V663" stroke="#d01010" stroke-width="1"/><path d="M547.5 616V663" stroke="#a01010" stroke-width="1"/><path d="M548.5 616V663" stroke="#f0c000" stroke-width="1"/><path d="M550.5 616V663" stroke="#f0d000" stroke-width="1"/><path d="M677.5 616V663" stroke="#c01010" stroke-width="1"/><defs><linearGradient id="cb" x1="0" y1="0" x2="0" y2="1"><stop offset="0" stop-color="#ff6a00"/><stop offset="0.07" stop-color="#ff6a00"/><stop offset="0.17" stop-color="#500000"/><stop offset="0.47" stop-color="#d00000"/><stop offset="0.55" stop-color="#ffee00"/><stop offset="0.68" stop-color="#00ff00"/><stop offset="0.8" stop-color="#007020"/><stop offset="0.86" stop-color="#6080ff"/><stop offset="1" stop-color="#6080ff"/></linearGradient></defs><rect x="735" y="631" width="10" height="17" fill="url(#cb)"/></svg>
<div class="t" style="left:769px;top:65px;letter-spacing:0px">Zoom</div>
<div style="left:780px;top:89px;width:4px;height:168px;box-shadow:inset 1px 1px #808080,inset -1px -1px #fff,inset 2px 2px #404040,inset -2px -2px #d4d0c8;"></div>
<div style="left:767px;top:94px;width:4px;height:1px;background:#000;"></div>
<div style="left:794px;top:94px;width:4px;height:1px;background:#000;"></div>
<div style="left:768px;top:110px;width:3px;height:1px;background:#000;"></div>
<div style="left:794px;top:110px;width:3px;height:1px;background:#000;"></div>
<div style="left:768px;top:125px;width:3px;height:1px;background:#000;"></div>
<div style="left:794px;top:125px;width:3px;height:1px;background:#000;"></div>
<div style="left:768px;top:141px;width:3px;height:1px;background:#000;"></div>
<div style="left:794px;top:141px;width:3px;height:1px;background:#000;"></div>
<div style="left:768px;top:157px;width:3px;height:1px;background:#000;"></div>
<div style="left:794px;top:157px;width:3px;height:1px;background:#000;"></div>
<div style="left:768px;top:172px;width:3px;height:1px;background:#000;"></div>
<div style="left:794px;top:172px;width:3px;height:1px;background:#000;"></div>
<div style="left:768px;top:188px;width:3px;height:1px;background:#000;"></div>
<div style="left:794px;top:188px;width:3px;height:1px;background:#000;"></div>
<div style="left:768px;top:204px;width:3px;height:1px;background:#000;"></div>
<div style="left:794px;top:204px;width:3px;height:1px;background:#000;"></div>
<div style="left:768px;top:220px;width:3px;height:1px;background:#000;"></div>
<div style="left:794px;top:220px;width:3px;height:1px;background:#000;"></div>
<div style="left:768px;top:235px;width:3px;height:1px;background:#000;"></div>
<div style="left:794px;top:235px;width:3px;height:1px;background:#000;"></div>
<div style="left:767px;top:251px;width:4px;height:1px;background:#000;"></div>
<div style="left:794px;top:251px;width:4px;height:1px;background:#000;"></div>
<div style="left:772px;top:246px;width:21px;height:11px;background:#d4d0c8;box-shadow:inset -1px -1px #404040,inset 1px 1px #fff,inset -2px -2px #808080;"></div>
<div class="t" style="left:763px;top:269px;letter-spacing:-0.25px">Contrast</div>
<div style="left:780px;top:293px;width:4px;height:168px;box-shadow:inset 1px 1px #808080,inset -1px -1px #fff,inset 2px 2px #404040,inset -2px -2px #d4d0c8;"></div>
<div style="left:767px;top:298px;width:4px;height:1px;background:#000;"></div>
<div style="left:794px;top:298px;width:4px;height:1px;background:#000;"></div>
<div style="left:768px;top:317px;width:3px;height:1px;background:#000;"></div>
<div style="left:794px;top:317px;width:3px;height:1px;background:#000;"></div>
<div style="left:768px;top:337px;width:3px;height:1px;background:#000;"></div>
<div style="left:794px;top:337px;width:3px;height:1px;background:#000;"></div>
<div style="left:768px;top:357px;width:3px;height:1px;background:#000;"></div>
<div style="left:794px;top:357px;width:3px;height:1px;background:#000;"></div>
<div style="left:768px;top:377px;width:3px;height:1px;background:#000;"></div>
<div style="left:794px;top:377px;width:3px;height:1px;background:#000;"></div>
<div style="left:768px;top:396px;width:3px;height:1px;background:#000;"></div>
<div style="left:794px;top:396px;width:3px;height:1px;background:#000;"></div>
<div style="left:768px;top:416px;width:3px;height:1px;background:#000;"></div>
<div style="left:794px;top:416px;width:3px;height:1px;background:#000;"></div>
<div style="left:768px;top:436px;width:3px;height:1px;background:#000;"></div>
<div style="left:794px;top:436px;width:3px;height:1px;background:#000;"></div>
<div style="left:767px;top:455px;width:4px;height:1px;background:#000;"></div>
<div style="left:794px;top:455px;width:4px;height:1px;background:#000;"></div>
<div style="left:772px;top:352px;width:21px;height:11px;background:#d4d0c8;box-shadow:inset -1px -1px #404040,inset 1px 1px #fff,inset -2px -2px #808080;"></div>
<div class="t" style="left:768px;top:472px;letter-spacing:-0.1px">Speed</div>
<div style="left:780px;top:496px;width:4px;height:168px;box-shadow:inset 1px 1px #808080,inset -1px -1px #fff,inset 2px 2px #404040,inset -2px -2px #d4d0c8;"></div>
<div style="left:767px;top:501px;width:4px;height:1px;background:#000;"></div>
<div style="left:794px;top:501px;width:4px;height:1px;background:#000;"></div>
<div style="left:768px;top:517px;width:3px;height:1px;background:#000;"></div>
<div style="left:794px;top:517px;width:3px;height:1px;background:#000;"></div>
<div style="left:768px;top:533px;width:3px;height:1px;background:#000;"></div>
<div style="left:794px;top:533px;width:3px;height:1px;background:#000;"></div>
<div style="left:768px;top:549px;width:3px;height:1px;background:#000;"></div>
<div style="left:794px;top:549px;width:3px;height:1px;background:#000;"></div>
<div style="left:768px;top:564px;width:3px;height:1px;background:#000;"></div>
<div style="left:794px;top:564px;width:3px;height:1px;background:#000;"></div>
<div style="left:768px;top:580px;width:3px;height:1px;background:#000;"></div>
<div style="left:794px;top:580px;width:3px;height:1px;background:#000;"></div>
<div style="left:768px;top:596px;width:3px;height:1px;background:#000;"></div>
<div style="left:794px;top:596px;width:3px;height:1px;background:#000;"></div>
<div style="left:768px;top:612px;width:3px;height:1px;background:#000;"></div>
<div style="left:794px;top:612px;width:3px;height:1px;background:#000;"></div>
<div style="left:768px;top:628px;width:3px;height:1px;background:#000;"></div>
<div style="left:794px;top:628px;width:3px;height:1px;background:#000;"></div>
<div style="left:768px;top:643px;width:3px;height:1px;background:#000;"></div>
<div style="left:794px;top:643px;width:3px;height:1px;background:#000;"></div>
<div style="left:767px;top:658px;width:4px;height:1px;background:#000;"></div>
<div style="left:794px;top:658px;width:4px;height:1px;background:#000;"></div>
<div style="left:772px;top:580px;width:21px;height:11px;background:#d4d0c8;box-shadow:inset -1px -1px #404040,inset 1px 1px #fff,inset -2px -2px #808080;"></div>
</body></html>
